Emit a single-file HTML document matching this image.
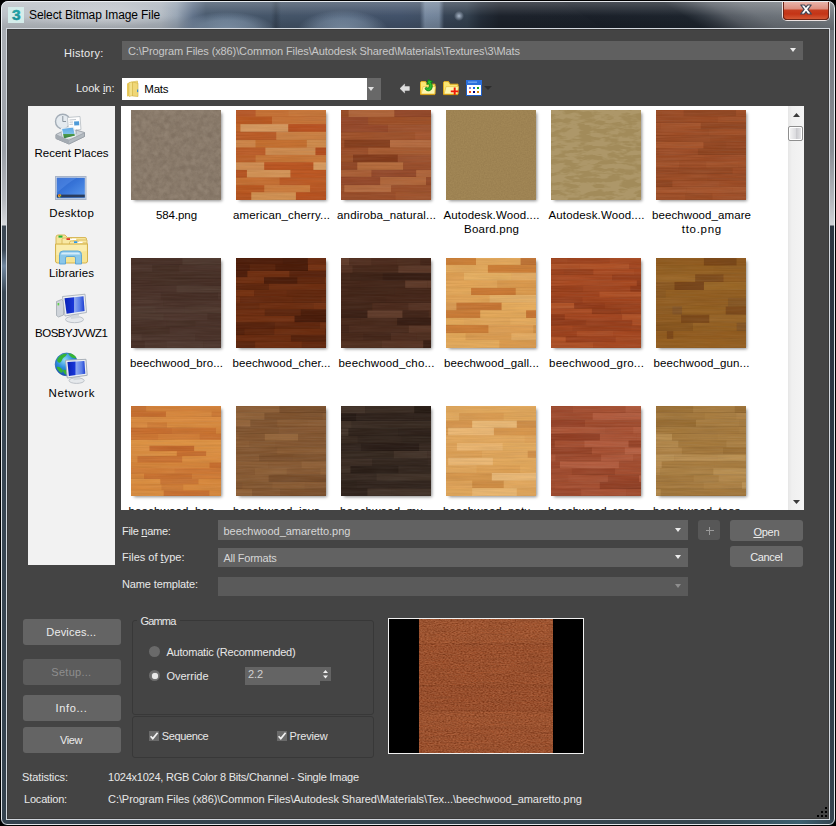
<!DOCTYPE html>
<html><head><meta charset="utf-8"><title>Select Bitmap Image File</title>
<style>
html,body{margin:0;padding:0;background:#000;}
body{width:836px;height:826px;overflow:hidden;position:relative;font-family:"Liberation Sans",sans-serif;}
*{box-sizing:border-box;}
.a{position:absolute;}
.t{position:absolute;white-space:nowrap;line-height:16px;font-family:"Liberation Sans",sans-serif;}
u{text-decoration:underline;text-underline-offset:1px;}
.btn{position:absolute;background:#646464;border-radius:3px;}
.cmb{position:absolute;background:#646464;}
.tri{position:absolute;width:0;height:0;border-left:3.5px solid transparent;border-right:3.5px solid transparent;border-top:4px solid #ececec;}
.th{position:absolute;width:90px;height:90px;overflow:hidden;box-shadow:2px 2px 3px -1px rgba(0,0,0,.45);}
.th svg{display:block;}
.lb{position:absolute;text-align:center;font-size:11.5px;line-height:14px;color:#000;white-space:nowrap;}
</style></head><body>
<div class="a" style="left:0;top:0;width:836px;height:826px;border-radius:8px 8px 7px 7px;background:#36454f;border:1px solid #000;overflow:hidden;"><div class="a" style="left:0;top:0;width:834px;height:29px;overflow:hidden;background:radial-gradient(ellipse 5px 5px at 458px 15px,rgba(200,214,232,.8),rgba(190,205,225,0) 100%),linear-gradient(90deg,rgba(160,178,198,0) 419px,rgba(150,170,194,.62) 424px,rgba(150,170,194,.62) 438px,rgba(160,178,198,0) 443px),linear-gradient(90deg,rgba(30,40,52,0) 270px,rgba(30,40,52,.35) 275px,rgba(30,40,52,0) 280px),radial-gradient(ellipse 50px 20px at 226px 31px,rgba(150,172,196,.95),rgba(150,172,196,.55) 60%,rgba(150,168,188,0) 100%),radial-gradient(ellipse 46px 22px at 342px 31px,rgba(146,168,192,.9),rgba(146,168,192,.5) 60%,rgba(150,168,188,0) 100%),linear-gradient(90deg,#bcc1c7 0px,#b8bec5 120px,#aeb6bf 160px,#96a3b2 176px,#62738a 192px,#47586c 205px,#445468 290px,#42526a 400px,#415065 424px,#364354 444px,#34414f 466px,#242d39 480px,#1c222b 498px,#1a2029 834px);"><div class="a" style="left:560px;top:0;width:500px;height:29px;transform-origin:0 0;transform:skewX(57deg);background:linear-gradient(90deg,#1a2029 0px,#1d242d 100px,#333a43 120px,#565c64 145px,#6a7077 175px,#73797f 230px,#747a80 500px);"></div><div class="a" style="left:0;top:0;width:834px;height:29px;background:linear-gradient(180deg,rgba(255,255,255,.22) 0,rgba(255,255,255,.1) 8px,rgba(255,255,255,0) 15px,rgba(0,0,0,.10) 24px,rgba(0,0,0,.14) 29px);"></div></div><div class="a" style="left:0;top:29px;width:8px;height:796px;background:linear-gradient(180deg,#a9aeb4 0px,#9a9fa6 120px,#b5b9be 170px,#d6d9dc 195px,#3a4652 196px,#3b4855 220px,#7288a0 236px,#3a4855 262px,#34424e 796px);"></div><div class="a" style="left:827px;top:29px;width:8px;height:796px;background:linear-gradient(180deg,#73787e 0px,#8a8f95 120px,#b4b8bd 170px,#cfd2d6 195px,#2b3540 196px,#2c3844 400px,#34444f 796px);"></div><div class="a" style="left:0;top:818px;width:834px;height:8px;background:linear-gradient(90deg,#34424e 0px,#36464f 700px,#3d6070 800px,#34444f 834px);"></div><div class="a" style="left:0;top:0;width:834px;height:824px;border:1px solid rgba(240,243,246,.92);border-radius:7px 7px 6px 6px;"></div></div><div class="a" style="left:6px;top:28px;width:824px;height:792px;border:1px solid #d3d8de;"></div><div class="a" style="left:7px;top:29px;width:822px;height:790px;background:#444444;border:1px solid #3a3a3a;"></div><div class="a" style="left:8px;top:7px;width:16px;height:16px;background:#d4ecea;"><svg width="16" height="16" viewBox="0 0 16 16"><defs><linearGradient id="g3" x1="0" y1="0" x2="0" y2="1"><stop offset="0" stop-color="#2cb6b4"/><stop offset="1" stop-color="#0e7e8c"/></linearGradient></defs><text x="8.2" y="13" text-anchor="middle" font-family="Liberation Sans" font-weight="bold" font-size="15.5" fill="url(#g3)" stroke="#1a9aa0" stroke-width=".5">3</text></svg></div><div class="a" style="left:14px;top:3px;width:170px;height:24px;background:radial-gradient(ellipse 50% 50% at 50% 50%,rgba(255,255,255,.28),rgba(255,255,255,.12) 60%,rgba(255,255,255,0) 100%);"></div><div class="t" style="left:29px;top:6.84px;font-size:12px;color:#000;letter-spacing:-0.098px;">Select Bitmap Image File</div><div class="a" style="left:782px;top:2px;width:48px;height:19px;border:1px solid rgba(255,255,255,.88);border-top:none;border-radius:0 0 5px 5px;background:#5b1408;"></div><div class="a" style="left:783px;top:2px;width:46px;height:18px;border-radius:0 0 4px 4px;background:linear-gradient(180deg,#e9b3a8 0,#dc8e7f 7px,#c63e20 8px,#c43416 12px,#d65f3a 18px);border:1px solid #6e2416;border-top:none;"></div><svg class="a" style="left:798px;top:3px;" width="16" height="13" viewBox="0 0 16 13"><path d="M2.8 2 L6.4 2 L8 4.1 L9.6 2 L13.2 2 L9.9 6.4 L13.4 11 L9.7 11 L8 8.7 L6.3 11 L2.6 11 L6.1 6.4 Z" fill="#fff" stroke="#3f4656" stroke-width="1.2" stroke-linejoin="round"/></svg><div class="t" style="left:64px;top:44.69px;font-size:11px;color:#ececec;letter-spacing:0.277px;">History:</div><div class="cmb" style="left:122px;top:41px;width:681px;height:19px;background:#606060;"></div><div class="t" style="left:128px;top:42.69px;font-size:11px;color:#c8c8c8;letter-spacing:-0.112px;">C:\Program Files (x86)\Common Files\Autodesk Shared\Materials\Textures\3\Mats</div><div class="tri" style="left:789.5px;top:48px;"></div><div class="t" style="left:76px;top:79.69px;font-size:11px;color:#ececec;letter-spacing:-0.008px;">Look <u>i</u>n:</div><div class="a" style="left:122px;top:78px;width:245px;height:22px;background:#fff;"></div><div class="a" style="left:367px;top:78px;width:14px;height:22px;background:#686868;"></div><div class="tri" style="left:367.5px;top:87px;border-top-color:#e0e0e0;"></div><svg class="a" style="left:125px;top:80px;" width="16" height="18" viewBox="0 0 16 18"><path d="M2 3.5 L7 1.5 L7 15 L2 16.5 Z" fill="#e8c95a"/><path d="M4 2.5 L12.5 1 L12.5 14.5 L4 16.5 Z" fill="#f3e08a" stroke="#d9b84a" stroke-width=".6"/><path d="M7.5 2 L13 3.2 L13 16.5 L7.5 16 Z" fill="#f0d778" stroke="#cfae3e" stroke-width=".6"/><rect x="12" y="9.5" width="1.2" height="2.6" fill="#3f8fd0"/></svg><div class="t" style="left:144.3px;top:81.02px;font-size:11.5px;color:#000;letter-spacing:-0.227px;">Mats</div><svg class="a" style="left:399px;top:83px;" width="12" height="11" viewBox="0 0 12 11"><path d="M1 5.5 L5.6 1 L5.6 3.6 L10.4 3.6 L10.4 7.4 L5.6 7.4 L5.6 10 Z" fill="#dedede" stroke="#f2f2f2" stroke-width=".4"/></svg><svg class="a" style="left:419px;top:79px;" width="18" height="18" viewBox="0 0 18 18"><path d="M1.5 3.2 L1.5 15.2 L16 15.2 L16 5.2 L8 5.2 L6.6 2.6 L2.2 2.6 Z" fill="#fbe774" stroke="#e4b020" stroke-width="1"/><path d="M2.2 15 L4 7.6 L16.4 7.6 L15.6 15 Z" fill="#fef7b0" stroke="#ecc23c" stroke-width=".7"/><path d="M1.5 15.6 L16 15.6" stroke="#d49c12" stroke-width="1"/><path d="M6 9.4 C7 12 10.6 12.8 12.4 10.2 C13.8 8 13.4 5 11.8 3.4 L13.8 2.6 L9.4 .8 L7.8 5.4 L9.6 4.6 C10.8 6.4 10.6 8.2 9.4 8.8 C8.4 9.2 7.4 8.6 7.4 8.2 Z" fill="#2ebc2e" stroke="#0a7f14" stroke-width=".9" stroke-linejoin="round"/></svg><svg class="a" style="left:442px;top:79px;" width="18" height="18" viewBox="0 0 18 18"><path d="M1.5 3.2 L1.5 15.2 L16 15.2 L16 5.2 L8 5.2 L6.6 2.6 L2.2 2.6 Z" fill="#fbe774" stroke="#e4b020" stroke-width="1"/><path d="M2.2 15 L4 7.6 L16.4 7.6 L15.6 15 Z" fill="#fef7b0" stroke="#ecc23c" stroke-width=".7"/><path d="M1.5 15.6 L16 15.6" stroke="#d49c12" stroke-width="1"/><path d="M12.7 8.6 L12.7 15.8 M8.8 12.4 L16.4 12.4" stroke="#f01808" stroke-width="1.9"/></svg><svg class="a" style="left:466px;top:80px;" width="16" height="16" viewBox="0 0 16 16"><rect x=".5" y=".5" width="15" height="15" fill="#fff" stroke="#1f5fc8" stroke-width="1"/><rect x="0" y="0" width="16" height="5" fill="#2b6fdc"/><rect x="2" y="1.5" width="9" height="1.4" fill="#6fa3ef"/><rect x="3" y="7" width="2" height="2" fill="#8c84d4"/><rect x="7" y="7" width="2" height="2" fill="#1565e6"/><rect x="11" y="7" width="2" height="2" fill="#12a51a"/><rect x="3" y="11" width="2" height="2" fill="#ff4a0a"/><rect x="7" y="11" width="2" height="2" fill="#00007c"/><rect x="11" y="11" width="2" height="2" fill="#d68208"/></svg><div class="tri" style="left:484px;top:86px;border-left-width:4px;border-right-width:4px;border-top-width:4px;border-top-color:#2c2c2c;"></div><div class="a" style="left:28px;top:106px;width:87px;height:459px;background:#f2f2f2;"></div><svg class="a" style="left:54px;top:112px;" width="34" height="34" viewBox="0 0 34 34"><defs><linearGradient id="ph" x1="0" y1="0" x2="0" y2="1"><stop offset="0" stop-color="#5aa4e4"/><stop offset=".55" stop-color="#7cc0e8"/><stop offset=".6" stop-color="#4f9a4a"/><stop offset="1" stop-color="#2f7a3a"/></linearGradient></defs><circle cx="8.8" cy="9.5" r="7.3" fill="#e4eaef" stroke="#a3adb7" stroke-width="1.4"/><path d="M8.8 4 L8.8 9.5 L12 9.5" stroke="#8a949e" stroke-width="1" fill="none"/><path d="M13.5 5.5 L26 4.5 L27 17.5 L14.5 19 Z" fill="#fdfdfd" stroke="#b4bbc2" stroke-width=".8"/><path d="M15.5 8 L22 7.5 M15.5 10.2 L19 10 M15.5 12.4 L19 12.2" stroke="#b9c0c7" stroke-width=".9"/><path d="M20 9.5 L25 9.2 L25.3 13.2 L20.3 13.6 Z" fill="#4d9ad8"/><path d="M2 22.5 L8 19.5 L8 24.5 L22 22 L22 18 L30.5 20.5 L30.5 24.5 L15 32 L2 26.5 Z" fill="#cdd2d7" stroke="#8e969e" stroke-width=".8"/><path d="M7.5 16.5 L19.5 15 L21.5 24 L9.5 27 Z" fill="url(#ph)" stroke="#eef2f5" stroke-width="1.1"/><path d="M2 22.8 L15 28.2 L30.5 20.8 L30.5 24.5 L15 32 L2 26.5 Z" fill="#b3bac0" stroke="#8e969e" stroke-width=".6"/><path d="M2 22.8 L15 28.2 L15 32 L2 26.5 Z" fill="#a4abb2"/></svg><div class="t" style="left:-28.50px;width:200px;text-align:center;top:145.02px;font-size:11.5px;color:#000;letter-spacing:-0.010px;">Recent Places</div><svg class="a" style="left:55px;top:176px;" width="32" height="24" viewBox="0 0 32 24"><defs><linearGradient id="dk" x1="0" y1="0" x2="1" y2="1"><stop offset="0" stop-color="#2a5fc6"/><stop offset=".45" stop-color="#3774d8"/><stop offset="1" stop-color="#5a98ec"/></linearGradient></defs><rect x=".5" y=".5" width="30.5" height="23" fill="#cdd6e4" stroke="#a8b4c8" stroke-width="1"/><rect x="1.8" y="1.8" width="28" height="20.4" fill="url(#dk)"/><path d="M1.8 1.8 L22 1.8 C14 6 8 12 1.8 17 Z" fill="#5a92ec" opacity=".45"/><rect x="1.8" y="18.6" width="28" height="2.8" fill="#2b3d5c"/><rect x="3" y="18.2" width="3.2" height="3.2" rx="1.4" fill="#e8b030"/><rect x="3.8" y="18.6" width="1.4" height="1.4" fill="#d84820"/><rect x="4.8" y="19.8" width="1.2" height="1.2" fill="#3a9a3a"/></svg><div class="t" style="left:-28.30px;width:200px;text-align:center;top:205.02px;font-size:11.5px;color:#000;letter-spacing:0.404px;">Desktop</div><svg class="a" style="left:54px;top:233px;" width="35" height="32" viewBox="0 0 35 32"><path d="M2 4.2 Q2 2 4 2 L11 2 L13.5 4.5 L31 4.5 Q32.5 4.5 32.5 6 L32.5 29 L2 29 Z" fill="#f6e49a" stroke="#d8b95c" stroke-width="1"/><rect x="4.5" y="2.6" width="4" height="2" fill="#22b43a"/><path d="M8 6.5 Q8 5 10 5 L17 5 L19 7 L33 7 L33 29 L8 29 Z" fill="#f8e8a4" stroke="#d8b95c" stroke-width=".9"/><rect x="12.5" y="5.2" width="3.5" height="1.8" fill="#e0382a"/><rect x="16.2" y="5.6" width="6" height="1.5" fill="#fff"/><path d="M15.5 9.5 Q15.5 8 17.5 8 L24 8 L26 10 L33 10 L33 29 L15.5 29 Z" fill="#f9eaa8" stroke="#d8b95c" stroke-width=".9"/><rect x="20" y="8.3" width="3.4" height="1.7" fill="#2a98ea"/><rect x="23.6" y="8.7" width="5" height="1.4" fill="#fff"/><path d="M1.5 11 L33.5 11 L33.5 28 Q33.5 30 31.5 30 L3.5 30 Q1.5 30 1.5 28 Z" fill="#f7e594" stroke="#d4b24e" stroke-width="1"/><path d="M2.5 12 L32.5 12 L32.5 18 L2.5 22 Z" fill="#fbf0b8" opacity=".7"/><path d="M5.5 31 L5.5 21.5 Q5.5 18 9 18 L24 18 Q27.5 18 27.5 21.5 L27.5 31 L21.5 31 L21.5 25 Q21.5 23.5 20 23.5 L13 23.5 Q11.5 23.5 11.5 25 L11.5 31 Z" fill="#86c6ee" stroke="#4f9fd8" stroke-width=".9" opacity=".95"/><path d="M7 21.5 Q7 19.5 9 19.5 L24 19.5 Q26 19.5 26 21.5 L7 21.5 Z" fill="#d4ecfa"/></svg><div class="t" style="left:-28.45px;width:200px;text-align:center;top:265.02px;font-size:11.5px;color:#000;letter-spacing:0.101px;">Libraries</div><svg class="a" style="left:55px;top:293px;" width="33" height="31" viewBox="0 0 33 31"><defs><linearGradient id="sc" x1="0" y1="0" x2="1" y2="0"><stop offset="0" stop-color="#0a22b4"/><stop offset=".45" stop-color="#1836d8"/><stop offset=".5" stop-color="#8ea8f0"/><stop offset=".75" stop-color="#5a7ee8"/><stop offset="1" stop-color="#1c3cd0"/></linearGradient></defs><path d="M1.5 8.5 L6.5 6.5 L8.5 8 L8.5 22 L3.5 24 L1.5 22.5 Z" fill="#cfd4da" stroke="#9aa2ab" stroke-width=".7"/><rect x="2.6" y="10" width="1.6" height="2.4" fill="#5fd04a"/><ellipse cx="19.5" cy="26.5" rx="9" ry="3.2" fill="#e6e9ec" stroke="#b1b8bf" stroke-width=".8"/><path d="M16 20 L24 19 L24 25 L16 26 Z" fill="#d2d7dc"/><path d="M7.5 3.5 L30 1.2 L31.5 19.5 L10 23 Z" fill="#eceff2" stroke="#a9b1ba" stroke-width=".9"/><path d="M9.5 5.2 L28.5 3.2 L29.6 18 L11.6 20.8 Z" fill="url(#sc)"/></svg><div class="t" style="left:-28.74px;width:200px;text-align:center;top:325.02px;font-size:11.5px;color:#000;letter-spacing:-0.483px;">BOSBYJVWZ1</div><svg class="a" style="left:54px;top:351px;" width="35" height="35" viewBox="0 0 35 35"><defs><radialGradient id="gl" cx=".42" cy=".3" r=".75"><stop offset="0" stop-color="#8fdcf4"/><stop offset=".45" stop-color="#2f8ee0"/><stop offset="1" stop-color="#1444a8"/></radialGradient><linearGradient id="sc2" x1="0" y1="0" x2="1" y2="0"><stop offset="0" stop-color="#0a22b4"/><stop offset=".42" stop-color="#1836d8"/><stop offset=".48" stop-color="#8ea8f0"/><stop offset=".8" stop-color="#5a7ee8"/><stop offset="1" stop-color="#1c3cd0"/></linearGradient></defs><circle cx="12.6" cy="13.4" r="11.4" fill="url(#gl)" stroke="#1d55a8" stroke-width=".6"/><path d="M3 9 C5 4 10 2 13 3 C12 6 9 6 8 9 C7 12 4 13 3 9 Z M14 2.5 C18 2 21 4 22.5 7 C20 8 17 7 14 2.5 Z M2.5 16 C5 15 8 17 9 20 C8 23 5 22 2.5 16 Z M9 19 C12 18 14 20 13.5 23.5 C11 24.5 9.5 22 9 19 Z" fill="#36b436"/><ellipse cx="22.6" cy="29.6" rx="7.6" ry="2.8" fill="#e6e9ec" stroke="#b1b8bf" stroke-width=".8"/><path d="M19.5 25 L26 24.3 L26 28.6 L19.5 29.2 Z" fill="#d2d7dc"/><path d="M11.5 9.3 L32 8.3 L33.2 24.3 L13.3 27 Z" fill="#eceff2" stroke="#a1a9b2" stroke-width=".9"/><path d="M13.4 11 L30.4 10 L31.3 22.8 L14.9 25 Z" fill="url(#sc2)"/></svg><div class="t" style="left:-28.19px;width:200px;text-align:center;top:385.02px;font-size:11.5px;color:#000;letter-spacing:0.618px;">Network</div><div class="a" id="list" style="left:121px;top:106px;width:683px;height:404px;background:#fff;overflow:hidden;"><svg width="0" height="0" style="position:absolute"><defs><filter id="grain" x="0" y="0" width="100%" height="100%" color-interpolation-filters="sRGB"><feTurbulence type="fractalNoise" baseFrequency="0.03 0.6" numOctaves="2" seed="3"/><feColorMatrix type="matrix" values="0 0 0 0 0.000  0 0 0 0 0.000  0 0 0 0 0.000  1.4 1.4 0 0 -1.0"/></filter><filter id="grainl" x="0" y="0" width="100%" height="100%" color-interpolation-filters="sRGB"><feTurbulence type="fractalNoise" baseFrequency="0.03 0.6" numOctaves="2" seed="9"/><feColorMatrix type="matrix" values="0 0 0 0 1.000  0 0 0 0 1.000  0 0 0 0 1.000  1.4 1.4 0 0 -1.0"/></filter><filter id="stucco" x="0" y="0" width="100%" height="100%" color-interpolation-filters="sRGB"><feTurbulence type="fractalNoise" baseFrequency="0.18" numOctaves="4" seed="8"/><feColorMatrix type="matrix" values="0 0 0 0 0.353  0 0 0 0 0.298  0 0 0 0 0.251  1.6 1.6 0 0 -1.1"/></filter><filter id="stuccol" x="0" y="0" width="100%" height="100%" color-interpolation-filters="sRGB"><feTurbulence type="fractalNoise" baseFrequency="0.18" numOctaves="4" seed="21"/><feColorMatrix type="matrix" values="0 0 0 0 0.690  0 0 0 0 0.635  0 0 0 0 0.573  1.6 1.6 0 0 -1.2"/></filter><filter id="fine" x="0" y="0" width="100%" height="100%" color-interpolation-filters="sRGB"><feTurbulence type="fractalNoise" baseFrequency="0.7" numOctaves="2" seed="5"/><feColorMatrix type="matrix" values="0 0 0 0 0.478  0 0 0 0 0.376  0 0 0 0 0.220  1.2 1.2 0 0 -0.8"/></filter><filter id="speck" x="0" y="0" width="100%" height="100%" color-interpolation-filters="sRGB"><feTurbulence type="fractalNoise" baseFrequency="0.5 0.9" numOctaves="2" seed="31"/><feColorMatrix type="matrix" values="0 0 0 0 0.416  0 0 0 0 0.173  0 0 0 0 0.063  1.6 1.6 0 0 -0.95"/></filter><filter id="speckl" x="0" y="0" width="100%" height="100%" color-interpolation-filters="sRGB"><feTurbulence type="fractalNoise" baseFrequency="0.5 0.9" numOctaves="2" seed="47"/><feColorMatrix type="matrix" values="0 0 0 0 0.784  0 0 0 0 0.502  0 0 0 0 0.353  1.6 1.6 0 0 -1.0"/></filter><filter id="wavy" x="0" y="0" width="100%" height="100%" color-interpolation-filters="sRGB"><feTurbulence type="fractalNoise" baseFrequency="0.07 0.22" numOctaves="3" seed="11"/><feColorMatrix type="matrix" values="0 0 0 0 0.722  0 0 0 0 0.643  0 0 0 0 0.471  4 4 0 0 -3.5"/></filter></defs></svg><div class="th" style="left:10px;top:4px;"><svg width="90" height="90" viewBox="0 0 90 90"><rect width="90" height="90" fill="#8b7c6c"/><rect width="90" height="90" fill="#5e5044" filter="url(#stucco)" opacity="0.22"/><rect width="90" height="90" filter="url(#stuccol)" opacity="0.2"/></svg></div><div class="lb" style="left:-44.54px;width:200px;top:101.82px;letter-spacing:-0.076px;">584.png</div><div class="th" style="left:115px;top:4px;"><svg width="90" height="90" viewBox="0 0 90 90"><rect width="90" height="90" fill="#c4682f"/><rect x="0.0" y="0.00" width="19.9" height="6.74" fill="#ba5a29"/><rect x="19.6" y="0.00" width="33.0" height="6.74" fill="#c77235"/><rect x="52.3" y="0.00" width="38.0" height="6.74" fill="#c8773a"/><rect x="0" y="6.04" width="90" height="0.6" fill="#000" opacity="0.06"/><rect x="0.0" y="6.54" width="36.3" height="7.83" fill="#bb5921"/><rect x="36.0" y="6.54" width="54.3" height="7.83" fill="#c77438"/><rect x="0" y="13.66" width="90" height="0.6" fill="#000" opacity="0.06"/><rect x="0.0" y="14.16" width="4.7" height="7.83" fill="#c16529"/><rect x="4.4" y="14.16" width="48.2" height="7.83" fill="#d5985f"/><rect x="52.3" y="14.16" width="38.0" height="7.83" fill="#ba5221"/><rect x="0" y="21.29" width="90" height="0.6" fill="#000" opacity="0.06"/><rect x="0.0" y="21.79" width="40.6" height="8.37" fill="#ba5c27"/><rect x="40.3" y="21.79" width="50.0" height="8.37" fill="#cb8043"/><rect x="0" y="29.46" width="90" height="0.6" fill="#000" opacity="0.06"/><rect x="0.0" y="29.96" width="19.9" height="7.83" fill="#cd8549"/><rect x="19.6" y="29.96" width="51.5" height="7.83" fill="#c46f2f"/><rect x="70.8" y="29.96" width="19.5" height="7.83" fill="#ce8a4b"/><rect x="0" y="37.09" width="90" height="0.6" fill="#000" opacity="0.06"/><rect x="0.0" y="37.59" width="29.7" height="7.83" fill="#bb5c27"/><rect x="29.4" y="37.59" width="50.4" height="7.83" fill="#ce8c50"/><rect x="79.5" y="37.59" width="10.8" height="7.83" fill="#b34e1f"/><rect x="0" y="44.72" width="90" height="0.6" fill="#000" opacity="0.06"/><rect x="0.0" y="45.22" width="19.9" height="7.28" fill="#bd6129"/><rect x="19.6" y="45.22" width="70.7" height="7.28" fill="#c77637"/><rect x="0" y="51.80" width="90" height="0.6" fill="#000" opacity="0.06"/><rect x="0.0" y="52.30" width="28.6" height="7.83" fill="#d08d52"/><rect x="28.3" y="52.30" width="49.3" height="7.83" fill="#ba5521"/><rect x="77.4" y="52.30" width="12.9" height="7.83" fill="#d89b5f"/><rect x="0" y="59.43" width="90" height="0.6" fill="#000" opacity="0.06"/><rect x="0.0" y="59.93" width="11.2" height="7.83" fill="#b65421"/><rect x="10.9" y="59.93" width="43.9" height="7.83" fill="#d29255"/><rect x="54.5" y="59.93" width="35.8" height="7.83" fill="#bc5722"/><rect x="0" y="67.05" width="90" height="0.6" fill="#000" opacity="0.06"/><rect x="0.0" y="67.55" width="43.9" height="7.83" fill="#c67033"/><rect x="43.6" y="67.55" width="46.7" height="7.83" fill="#bd5c26"/><rect x="0" y="74.68" width="90" height="0.6" fill="#000" opacity="0.06"/><rect x="0.0" y="75.18" width="28.6" height="7.28" fill="#ba5921"/><rect x="28.3" y="75.18" width="46.1" height="7.28" fill="#cb7c3d"/><rect x="74.1" y="75.18" width="16.2" height="7.28" fill="#ba5722"/><rect x="0" y="81.76" width="90" height="0.6" fill="#000" opacity="0.06"/><rect x="0.0" y="82.26" width="15.6" height="7.94" fill="#b6541f"/><rect x="15.3" y="82.26" width="45.0" height="7.94" fill="#d19152"/><rect x="59.9" y="82.26" width="30.4" height="7.94" fill="#b8521f"/><rect x="0" y="89.50" width="90" height="0.6" fill="#000" opacity="0.06"/><rect width="90" height="90" filter="url(#grain)" opacity="0.05"/><rect width="90" height="90" filter="url(#grainl)" opacity="0.04"/></svg></div><div class="lb" style="left:60.57px;width:200px;top:101.82px;letter-spacing:0.149px;">american_cherry...</div><div class="th" style="left:220px;top:4px;"><svg width="90" height="90" viewBox="0 0 90 90"><rect width="90" height="90" fill="#9c5028"/><rect x="0.0" y="0.00" width="7.9" height="7.28" fill="#9a4d26"/><rect x="7.6" y="0.00" width="46.1" height="7.28" fill="#b1663b"/><rect x="53.4" y="0.00" width="36.9" height="7.28" fill="#95492a"/><rect x="0" y="6.58" width="90" height="0.6" fill="#000" opacity="0.08"/><rect x="0.0" y="7.08" width="27.5" height="7.83" fill="#97492a"/><rect x="27.2" y="7.08" width="63.1" height="7.83" fill="#9e5028"/><rect x="0" y="14.21" width="90" height="0.6" fill="#000" opacity="0.08"/><rect x="0.0" y="14.71" width="47.2" height="7.83" fill="#96492a"/><rect x="46.9" y="14.71" width="43.4" height="7.83" fill="#9f532f"/><rect x="0" y="21.84" width="90" height="0.6" fill="#000" opacity="0.08"/><rect x="0.0" y="22.34" width="74.4" height="7.83" fill="#9f522b"/><rect x="74.1" y="22.34" width="16.2" height="7.83" fill="#a65832"/><rect x="0" y="29.46" width="90" height="0.6" fill="#000" opacity="0.08"/><rect x="0.0" y="29.96" width="3.6" height="7.83" fill="#9a4d28"/><rect x="3.3" y="29.96" width="46.1" height="7.83" fill="#863f1e"/><rect x="49.0" y="29.96" width="41.3" height="7.83" fill="#b46b40"/><rect x="0" y="37.09" width="90" height="0.6" fill="#000" opacity="0.08"/><rect x="0.0" y="37.59" width="27.5" height="7.28" fill="#9a4d28"/><rect x="27.2" y="37.59" width="63.1" height="7.28" fill="#a85c32"/><rect x="0" y="44.17" width="90" height="0.6" fill="#000" opacity="0.08"/><rect x="0.0" y="44.67" width="12.3" height="7.83" fill="#9c5028"/><rect x="12.0" y="44.67" width="45.0" height="7.83" fill="#843c1c"/><rect x="56.7" y="44.67" width="33.6" height="7.83" fill="#9c522f"/><rect x="0" y="51.80" width="90" height="0.6" fill="#000" opacity="0.08"/><rect x="0.0" y="52.30" width="16.6" height="7.83" fill="#924826"/><rect x="16.3" y="52.30" width="46.1" height="7.83" fill="#b46b3c"/><rect x="62.1" y="52.30" width="28.2" height="7.83" fill="#9a4e2b"/><rect x="0" y="59.43" width="90" height="0.6" fill="#000" opacity="0.08"/><rect x="0.0" y="59.93" width="30.8" height="7.28" fill="#aa5f36"/><rect x="30.5" y="59.93" width="45.0" height="7.28" fill="#94492a"/><rect x="75.2" y="59.93" width="15.1" height="7.28" fill="#b0663c"/><rect x="0" y="66.51" width="90" height="0.6" fill="#000" opacity="0.08"/><rect x="0.0" y="67.01" width="39.5" height="8.37" fill="#95492a"/><rect x="39.2" y="67.01" width="46.1" height="8.37" fill="#b2683c"/><rect x="85.0" y="67.01" width="5.3" height="8.37" fill="#974b2a"/><rect x="0" y="74.68" width="90" height="0.6" fill="#000" opacity="0.08"/><rect x="0.0" y="75.18" width="3.6" height="7.28" fill="#99502b"/><rect x="3.3" y="75.18" width="47.2" height="7.28" fill="#b46b40"/><rect x="50.1" y="75.18" width="40.2" height="7.28" fill="#9c502b"/><rect x="0" y="81.76" width="90" height="0.6" fill="#000" opacity="0.08"/><rect x="0.0" y="82.26" width="54.8" height="7.94" fill="#9a4e2a"/><rect x="54.5" y="82.26" width="35.8" height="7.94" fill="#a1552f"/><rect x="0" y="89.50" width="90" height="0.6" fill="#000" opacity="0.08"/><rect width="90" height="90" filter="url(#grain)" opacity="0.05"/><rect width="90" height="90" filter="url(#grainl)" opacity="0.04"/></svg></div><div class="lb" style="left:165.58px;width:200px;top:101.82px;letter-spacing:0.167px;">andiroba_natural...</div><div class="th" style="left:325px;top:4px;"><svg width="90" height="90" viewBox="0 0 90 90"><rect width="90" height="90" fill="#a28756"/><rect width="90" height="90" fill="#7a6038" filter="url(#fine)" opacity="0.22"/></svg></div><div class="lb" style="left:270.57px;width:200px;top:101.82px;letter-spacing:0.136px;">Autodesk.Wood....</div><div class="lb" style="left:270.61px;width:200px;top:115.82px;letter-spacing:0.219px;">Board.png</div><div class="th" style="left:430px;top:4px;"><svg width="90" height="90" viewBox="0 0 90 90"><rect width="90" height="90" fill="#a28b5a"/><rect width="90" height="90" fill="#9a8250" filter="url(#wavy)" opacity="0.5"/></svg></div><div class="lb" style="left:375.57px;width:200px;top:101.82px;letter-spacing:0.136px;">Autodesk.Wood....</div><div class="th" style="left:535px;top:4px;"><svg width="90" height="90" viewBox="0 0 90 90"><rect width="90" height="90" fill="#9e4d26"/><rect x="-49.2" y="0.00" width="55.2" height="6.63" fill="#9c4c25"/><rect x="5.7" y="0.00" width="22.3" height="6.63" fill="#9e4d26"/><rect x="27.7" y="0.00" width="52.7" height="6.63" fill="#934722"/><rect x="80.1" y="0.00" width="33.2" height="6.63" fill="#a04f27"/><rect x="0" y="5.83" width="90" height="0.7" fill="#000" opacity="0.08"/><rect x="-25.7" y="6.43" width="43.8" height="6.63" fill="#9b4b25"/><rect x="17.9" y="6.43" width="44.4" height="6.63" fill="#9c4c25"/><rect x="62.0" y="6.43" width="54.4" height="6.63" fill="#a15028"/><rect x="0" y="12.26" width="90" height="0.7" fill="#000" opacity="0.08"/><rect x="-20.8" y="12.86" width="26.0" height="6.63" fill="#a15028"/><rect x="4.9" y="12.86" width="40.1" height="6.63" fill="#a4532b"/><rect x="44.7" y="12.86" width="47.7" height="6.63" fill="#924621"/><rect x="0" y="18.69" width="90" height="0.7" fill="#000" opacity="0.08"/><rect x="-36.5" y="19.29" width="30.3" height="6.63" fill="#9d4c25"/><rect x="-6.5" y="19.29" width="59.6" height="6.63" fill="#9e4d26"/><rect x="52.9" y="19.29" width="48.1" height="6.63" fill="#a15028"/><rect x="0" y="25.11" width="90" height="0.7" fill="#000" opacity="0.08"/><rect x="-60.5" y="25.71" width="23.4" height="6.63" fill="#944722"/><rect x="-37.4" y="25.71" width="34.5" height="6.63" fill="#9a4b24"/><rect x="-3.2" y="25.71" width="57.5" height="6.63" fill="#9a4b25"/><rect x="54.0" y="25.71" width="48.8" height="6.63" fill="#974923"/><rect x="0" y="31.54" width="90" height="0.7" fill="#000" opacity="0.08"/><rect x="-30.0" y="32.14" width="27.8" height="6.63" fill="#934622"/><rect x="-2.5" y="32.14" width="50.2" height="6.63" fill="#a7562d"/><rect x="47.5" y="32.14" width="23.0" height="6.63" fill="#934621"/><rect x="70.1" y="32.14" width="47.1" height="6.63" fill="#964823"/><rect x="0" y="37.97" width="90" height="0.7" fill="#000" opacity="0.08"/><rect x="-24.1" y="38.57" width="27.4" height="6.63" fill="#9a4a24"/><rect x="2.9" y="38.57" width="39.2" height="6.63" fill="#9d4c26"/><rect x="41.9" y="38.57" width="61.5" height="6.63" fill="#924621"/><rect x="0" y="44.40" width="90" height="0.7" fill="#000" opacity="0.08"/><rect x="-55.3" y="45.00" width="49.1" height="6.63" fill="#9d4d26"/><rect x="-6.5" y="45.00" width="55.6" height="6.63" fill="#9e4d26"/><rect x="48.7" y="45.00" width="41.1" height="6.63" fill="#9d4c26"/><rect x="89.6" y="45.00" width="25.7" height="6.63" fill="#9c4c25"/><rect x="0" y="50.83" width="90" height="0.7" fill="#000" opacity="0.08"/><rect x="-30.2" y="51.43" width="53.7" height="6.63" fill="#a3522a"/><rect x="23.1" y="51.43" width="27.2" height="6.63" fill="#9d4c25"/><rect x="50.1" y="51.43" width="32.6" height="6.63" fill="#a25129"/><rect x="82.3" y="51.43" width="32.5" height="6.63" fill="#a15028"/><rect x="0" y="57.26" width="90" height="0.7" fill="#000" opacity="0.08"/><rect x="-38.0" y="57.86" width="33.0" height="6.63" fill="#9e4d26"/><rect x="-5.2" y="57.86" width="28.0" height="6.63" fill="#964823"/><rect x="22.4" y="57.86" width="54.5" height="6.63" fill="#944722"/><rect x="76.6" y="57.86" width="61.1" height="6.63" fill="#9d4c26"/><rect x="0" y="63.69" width="90" height="0.7" fill="#000" opacity="0.08"/><rect x="-37.4" y="64.29" width="35.1" height="6.63" fill="#9e4d26"/><rect x="-2.6" y="64.29" width="54.0" height="6.63" fill="#9c4c25"/><rect x="51.2" y="64.29" width="22.5" height="6.63" fill="#9a4a24"/><rect x="73.4" y="64.29" width="23.5" height="6.63" fill="#9a4b25"/><rect x="0" y="70.11" width="90" height="0.7" fill="#000" opacity="0.08"/><rect x="-44.5" y="70.71" width="36.8" height="6.63" fill="#a15028"/><rect x="-8.1" y="70.71" width="24.8" height="6.63" fill="#924621"/><rect x="16.4" y="70.71" width="46.8" height="6.63" fill="#a04f28"/><rect x="63.0" y="70.71" width="54.8" height="6.63" fill="#9e4d26"/><rect x="0" y="76.54" width="90" height="0.7" fill="#000" opacity="0.08"/><rect x="-6.2" y="77.14" width="36.8" height="6.63" fill="#a6552d"/><rect x="30.3" y="77.14" width="46.6" height="6.63" fill="#a6552d"/><rect x="76.5" y="77.14" width="26.2" height="6.63" fill="#a7562d"/><rect x="0" y="82.97" width="90" height="0.7" fill="#000" opacity="0.08"/><rect x="-28.7" y="83.57" width="58.3" height="6.63" fill="#a04f27"/><rect x="29.3" y="83.57" width="27.4" height="6.63" fill="#9a4b24"/><rect x="56.4" y="83.57" width="47.0" height="6.63" fill="#a15029"/><rect x="0" y="89.40" width="90" height="0.7" fill="#000" opacity="0.08"/><rect width="90" height="90" filter="url(#grain)" opacity="0.06"/><rect width="90" height="90" filter="url(#grainl)" opacity="0.05"/></svg></div><div class="lb" style="left:480.54px;width:200px;top:101.82px;letter-spacing:0.082px;">beechwood_amare</div><div class="lb" style="left:480.85px;width:200px;top:115.82px;letter-spacing:0.696px;">tto.png</div><div class="th" style="left:10px;top:152px;"><svg width="90" height="90" viewBox="0 0 90 90"><rect width="90" height="90" fill="#4b332a"/><rect x="-20.1" y="0.00" width="28.3" height="7.12" fill="#493128"/><rect x="8.0" y="0.00" width="43.7" height="7.12" fill="#483027"/><rect x="51.4" y="0.00" width="42.6" height="7.12" fill="#4f392f"/><rect x="0" y="6.32" width="90" height="0.7" fill="#000" opacity="0.08"/><rect x="-4.3" y="6.92" width="25.9" height="7.12" fill="#4d352c"/><rect x="21.3" y="6.92" width="27.3" height="7.12" fill="#462f25"/><rect x="48.2" y="6.92" width="60.2" height="7.12" fill="#4b332a"/><rect x="0" y="13.25" width="90" height="0.7" fill="#000" opacity="0.08"/><rect x="-60.5" y="13.85" width="24.2" height="7.12" fill="#4a3229"/><rect x="-36.7" y="13.85" width="28.1" height="7.12" fill="#4f382f"/><rect x="-8.9" y="13.85" width="54.9" height="7.12" fill="#462f25"/><rect x="45.8" y="13.85" width="47.9" height="7.12" fill="#462f25"/><rect x="0" y="20.17" width="90" height="0.7" fill="#000" opacity="0.08"/><rect x="-3.9" y="20.77" width="24.7" height="7.12" fill="#462e25"/><rect x="20.5" y="20.77" width="39.4" height="7.12" fill="#462f25"/><rect x="59.6" y="20.77" width="40.4" height="7.12" fill="#462e25"/><rect x="0" y="27.09" width="90" height="0.7" fill="#000" opacity="0.08"/><rect x="-43.3" y="27.69" width="32.1" height="7.12" fill="#4b332a"/><rect x="-11.6" y="27.69" width="57.3" height="7.12" fill="#4a3229"/><rect x="45.4" y="27.69" width="61.5" height="7.12" fill="#4f392f"/><rect x="0" y="34.02" width="90" height="0.7" fill="#000" opacity="0.08"/><rect x="-46.9" y="34.62" width="28.4" height="7.12" fill="#493128"/><rect x="-18.9" y="34.62" width="49.0" height="7.12" fill="#4b332a"/><rect x="29.9" y="34.62" width="57.3" height="7.12" fill="#462e25"/><rect x="86.9" y="34.62" width="46.1" height="7.12" fill="#4b332a"/><rect x="0" y="40.94" width="90" height="0.7" fill="#000" opacity="0.08"/><rect x="-52.1" y="41.54" width="60.1" height="7.12" fill="#4c342b"/><rect x="7.7" y="41.54" width="24.7" height="7.12" fill="#4c342b"/><rect x="32.1" y="41.54" width="62.0" height="7.12" fill="#4a3229"/><rect x="0" y="47.86" width="90" height="0.7" fill="#000" opacity="0.08"/><rect x="-23.9" y="48.46" width="49.0" height="7.12" fill="#4f392f"/><rect x="24.8" y="48.46" width="29.0" height="7.12" fill="#4e372e"/><rect x="53.5" y="48.46" width="53.0" height="7.12" fill="#4f382e"/><rect x="0" y="54.78" width="90" height="0.7" fill="#000" opacity="0.08"/><rect x="-24.2" y="55.38" width="57.2" height="7.12" fill="#4f392f"/><rect x="32.6" y="55.38" width="44.3" height="7.12" fill="#4d352c"/><rect x="76.6" y="55.38" width="56.9" height="7.12" fill="#472f26"/><rect x="0" y="61.71" width="90" height="0.7" fill="#000" opacity="0.08"/><rect x="-22.2" y="62.31" width="57.7" height="7.12" fill="#493128"/><rect x="35.1" y="62.31" width="29.3" height="7.12" fill="#473026"/><rect x="64.2" y="62.31" width="41.7" height="7.12" fill="#4a3229"/><rect x="0" y="68.63" width="90" height="0.7" fill="#000" opacity="0.08"/><rect x="-0.3" y="69.23" width="39.1" height="7.12" fill="#462f25"/><rect x="38.5" y="69.23" width="60.4" height="7.12" fill="#4b332a"/><rect x="0" y="75.55" width="90" height="0.7" fill="#000" opacity="0.08"/><rect x="-38.3" y="76.15" width="49.3" height="7.12" fill="#513a31"/><rect x="10.8" y="76.15" width="53.5" height="7.12" fill="#4c352c"/><rect x="64.0" y="76.15" width="38.0" height="7.12" fill="#493128"/><rect x="0" y="82.48" width="90" height="0.7" fill="#000" opacity="0.08"/><rect x="-39.3" y="83.08" width="24.8" height="7.12" fill="#4f382e"/><rect x="-14.8" y="83.08" width="28.8" height="7.12" fill="#483027"/><rect x="13.7" y="83.08" width="22.3" height="7.12" fill="#4e372e"/><rect x="35.7" y="83.08" width="36.8" height="7.12" fill="#513a31"/><rect x="72.2" y="83.08" width="46.9" height="7.12" fill="#4f382f"/><rect x="0" y="89.40" width="90" height="0.7" fill="#000" opacity="0.08"/><rect width="90" height="90" filter="url(#grain)" opacity="0.05"/><rect width="90" height="90" filter="url(#grainl)" opacity="0.04"/></svg></div><div class="lb" style="left:-44.45px;width:200px;top:249.82px;letter-spacing:0.103px;">beechwood_bro...</div><div class="th" style="left:115px;top:152px;"><svg width="90" height="90" viewBox="0 0 90 90"><rect width="90" height="90" fill="#6a2c10"/><rect x="-14.1" y="0.00" width="60.8" height="6.63" fill="#4f1e0b"/><rect x="46.4" y="0.00" width="25.7" height="6.63" fill="#4a1c0a"/><rect x="71.8" y="0.00" width="30.7" height="6.63" fill="#692b10"/><rect x="0" y="5.83" width="90" height="0.7" fill="#000" opacity="0.1"/><rect x="-28.1" y="6.43" width="42.1" height="6.63" fill="#4d1d0b"/><rect x="13.7" y="6.43" width="25.9" height="6.63" fill="#5a240d"/><rect x="39.3" y="6.43" width="33.0" height="6.63" fill="#4c1d0a"/><rect x="72.0" y="6.43" width="37.5" height="6.63" fill="#753213"/><rect x="0" y="12.26" width="90" height="0.7" fill="#000" opacity="0.1"/><rect x="-61.5" y="12.86" width="24.8" height="6.63" fill="#672a0f"/><rect x="-37.0" y="12.86" width="48.7" height="6.63" fill="#4f1e0b"/><rect x="11.5" y="12.86" width="42.2" height="6.63" fill="#702f11"/><rect x="53.4" y="12.86" width="45.6" height="6.63" fill="#59230d"/><rect x="0" y="18.69" width="90" height="0.7" fill="#000" opacity="0.1"/><rect x="-58.7" y="19.29" width="41.8" height="6.63" fill="#4b1c0a"/><rect x="-17.1" y="19.29" width="45.5" height="6.63" fill="#6f2f11"/><rect x="28.0" y="19.29" width="33.7" height="6.63" fill="#4c1d0a"/><rect x="61.5" y="19.29" width="27.7" height="6.63" fill="#60270e"/><rect x="88.9" y="19.29" width="49.9" height="6.63" fill="#703011"/><rect x="0" y="25.11" width="90" height="0.7" fill="#000" opacity="0.1"/><rect x="-52.3" y="25.71" width="42.4" height="6.63" fill="#58230d"/><rect x="-10.2" y="25.71" width="43.4" height="6.63" fill="#5f270e"/><rect x="33.0" y="25.71" width="58.4" height="6.63" fill="#6d2e11"/><rect x="0" y="31.54" width="90" height="0.7" fill="#000" opacity="0.1"/><rect x="-13.6" y="32.14" width="32.1" height="6.63" fill="#763313"/><rect x="18.1" y="32.14" width="33.0" height="6.63" fill="#672a0f"/><rect x="50.8" y="32.14" width="55.7" height="6.63" fill="#62280e"/><rect x="0" y="37.97" width="90" height="0.7" fill="#000" opacity="0.1"/><rect x="-24.6" y="38.57" width="28.9" height="6.63" fill="#713012"/><rect x="4.1" y="38.57" width="30.4" height="6.63" fill="#65290f"/><rect x="34.2" y="38.57" width="22.8" height="6.63" fill="#662a0f"/><rect x="56.7" y="38.57" width="29.1" height="6.63" fill="#63290f"/><rect x="85.5" y="38.57" width="38.7" height="6.63" fill="#682b10"/><rect x="0" y="44.40" width="90" height="0.7" fill="#000" opacity="0.1"/><rect x="-36.5" y="45.00" width="33.8" height="6.63" fill="#743112"/><rect x="-2.9" y="45.00" width="26.6" height="6.63" fill="#662a0f"/><rect x="23.3" y="45.00" width="54.6" height="6.63" fill="#6d2e11"/><rect x="77.6" y="45.00" width="61.5" height="6.63" fill="#733112"/><rect x="0" y="50.83" width="90" height="0.7" fill="#000" opacity="0.1"/><rect x="-8.7" y="51.43" width="37.8" height="6.63" fill="#6e2e11"/><rect x="28.7" y="51.43" width="36.4" height="6.63" fill="#5d260e"/><rect x="64.8" y="51.43" width="55.7" height="6.63" fill="#4c1d0a"/><rect x="0" y="57.26" width="90" height="0.7" fill="#000" opacity="0.1"/><rect x="-2.1" y="57.86" width="60.9" height="6.63" fill="#713012"/><rect x="58.6" y="57.86" width="45.5" height="6.63" fill="#4a1c0a"/><rect x="0" y="63.69" width="90" height="0.7" fill="#000" opacity="0.1"/><rect x="-27.4" y="64.29" width="25.6" height="6.63" fill="#6a2c10"/><rect x="-2.0" y="64.29" width="41.2" height="6.63" fill="#58230d"/><rect x="38.9" y="64.29" width="45.5" height="6.63" fill="#60270e"/><rect x="84.1" y="64.29" width="39.9" height="6.63" fill="#6d2e11"/><rect x="0" y="70.11" width="90" height="0.7" fill="#000" opacity="0.1"/><rect x="-29.2" y="70.71" width="38.1" height="6.63" fill="#56220c"/><rect x="8.5" y="70.71" width="30.2" height="6.63" fill="#60270e"/><rect x="38.4" y="70.71" width="51.3" height="6.63" fill="#6c2d10"/><rect x="89.4" y="70.71" width="23.2" height="6.63" fill="#53210c"/><rect x="0" y="76.54" width="90" height="0.7" fill="#000" opacity="0.1"/><rect x="-5.8" y="77.14" width="61.0" height="6.63" fill="#6a2c10"/><rect x="54.9" y="77.14" width="50.5" height="6.63" fill="#56220c"/><rect x="0" y="82.97" width="90" height="0.7" fill="#000" opacity="0.1"/><rect x="-32.6" y="83.57" width="52.1" height="6.63" fill="#5d260e"/><rect x="19.2" y="83.57" width="46.8" height="6.63" fill="#6e2e11"/><rect x="65.7" y="83.57" width="59.4" height="6.63" fill="#63280f"/><rect x="0" y="89.40" width="90" height="0.7" fill="#000" opacity="0.1"/><rect width="90" height="90" filter="url(#grain)" opacity="0.04"/><rect width="90" height="90" filter="url(#grainl)" opacity="0.03"/></svg></div><div class="lb" style="left:60.55px;width:200px;top:249.82px;letter-spacing:0.090px;">beechwood_cher...</div><div class="th" style="left:220px;top:152px;"><svg width="90" height="90" viewBox="0 0 90 90"><rect width="90" height="90" fill="#4a2a1c"/><rect x="-28.7" y="0.00" width="37.2" height="7.70" fill="#633e2d"/><rect x="8.2" y="0.00" width="22.6" height="7.70" fill="#533122"/><rect x="30.5" y="0.00" width="25.5" height="7.70" fill="#4d2c1e"/><rect x="55.7" y="0.00" width="23.9" height="7.70" fill="#4e2e1f"/><rect x="79.4" y="0.00" width="40.4" height="7.70" fill="#45271a"/><rect x="0" y="6.90" width="90" height="0.7" fill="#000" opacity="0.12"/><rect x="-14.8" y="7.50" width="26.7" height="7.70" fill="#533122"/><rect x="11.7" y="7.50" width="45.9" height="7.70" fill="#48291b"/><rect x="57.3" y="7.50" width="52.1" height="7.70" fill="#5b3828"/><rect x="0" y="14.40" width="90" height="0.7" fill="#000" opacity="0.12"/><rect x="-41.8" y="15.00" width="51.3" height="7.70" fill="#432619"/><rect x="9.2" y="15.00" width="33.0" height="7.70" fill="#3d2216"/><rect x="41.9" y="15.00" width="54.7" height="7.70" fill="#371e14"/><rect x="0" y="21.90" width="90" height="0.7" fill="#000" opacity="0.12"/><rect x="-54.5" y="22.50" width="24.5" height="7.70" fill="#4a2a1c"/><rect x="-30.3" y="22.50" width="23.2" height="7.70" fill="#533122"/><rect x="-7.4" y="22.50" width="26.8" height="7.70" fill="#442619"/><rect x="19.1" y="22.50" width="45.4" height="7.70" fill="#45271a"/><rect x="64.2" y="22.50" width="22.6" height="7.70" fill="#5f3b2a"/><rect x="86.6" y="22.50" width="23.0" height="7.70" fill="#5e3a29"/><rect x="0" y="29.40" width="90" height="0.7" fill="#000" opacity="0.12"/><rect x="-57.1" y="30.00" width="39.1" height="7.70" fill="#4d2c1e"/><rect x="-18.3" y="30.00" width="26.0" height="7.70" fill="#45271a"/><rect x="7.4" y="30.00" width="46.7" height="7.70" fill="#432619"/><rect x="53.8" y="30.00" width="44.5" height="7.70" fill="#442619"/><rect x="0" y="36.90" width="90" height="0.7" fill="#000" opacity="0.12"/><rect x="-16.6" y="37.50" width="62.1" height="7.70" fill="#442619"/><rect x="45.2" y="37.50" width="50.5" height="7.70" fill="#46271a"/><rect x="0" y="44.40" width="90" height="0.7" fill="#000" opacity="0.12"/><rect x="-37.9" y="45.00" width="24.0" height="7.70" fill="#4e2d1f"/><rect x="-14.2" y="45.00" width="45.9" height="7.70" fill="#432619"/><rect x="31.4" y="45.00" width="36.2" height="7.70" fill="#4c2b1d"/><rect x="67.3" y="45.00" width="40.4" height="7.70" fill="#543223"/><rect x="0" y="51.90" width="90" height="0.7" fill="#000" opacity="0.12"/><rect x="-35.6" y="52.50" width="23.0" height="7.70" fill="#47281b"/><rect x="-12.9" y="52.50" width="39.6" height="7.70" fill="#3c2116"/><rect x="26.5" y="52.50" width="35.3" height="7.70" fill="#603c2b"/><rect x="61.5" y="52.50" width="26.4" height="7.70" fill="#422519"/><rect x="87.6" y="52.50" width="53.5" height="7.70" fill="#4a2a1c"/><rect x="0" y="59.40" width="90" height="0.7" fill="#000" opacity="0.12"/><rect x="-44.0" y="60.00" width="32.2" height="7.70" fill="#49291b"/><rect x="-12.1" y="60.00" width="31.5" height="7.70" fill="#48291b"/><rect x="19.2" y="60.00" width="37.2" height="7.70" fill="#48291b"/><rect x="56.1" y="60.00" width="49.0" height="7.70" fill="#381e14"/><rect x="0" y="66.90" width="90" height="0.7" fill="#000" opacity="0.12"/><rect x="-16.1" y="67.50" width="24.3" height="7.70" fill="#45271a"/><rect x="8.0" y="67.50" width="60.2" height="7.70" fill="#4c2c1e"/><rect x="67.8" y="67.50" width="22.8" height="7.70" fill="#5a3727"/><rect x="0" y="74.40" width="90" height="0.7" fill="#000" opacity="0.12"/><rect x="-24.1" y="75.00" width="46.8" height="7.70" fill="#48291b"/><rect x="22.4" y="75.00" width="27.9" height="7.70" fill="#442619"/><rect x="50.0" y="75.00" width="25.8" height="7.70" fill="#4e2d1f"/><rect x="75.4" y="75.00" width="24.9" height="7.70" fill="#4e2e1f"/><rect x="0" y="81.90" width="90" height="0.7" fill="#000" opacity="0.12"/><rect x="-47.4" y="82.50" width="37.6" height="7.70" fill="#45271a"/><rect x="-10.1" y="82.50" width="50.9" height="7.70" fill="#523121"/><rect x="40.6" y="82.50" width="42.1" height="7.70" fill="#583525"/><rect x="82.3" y="82.50" width="43.5" height="7.70" fill="#3a2015"/><rect x="0" y="89.40" width="90" height="0.7" fill="#000" opacity="0.12"/><rect width="90" height="90" filter="url(#grain)" opacity="0.04"/><rect width="90" height="90" filter="url(#grainl)" opacity="0.03"/></svg></div><div class="lb" style="left:165.58px;width:200px;top:249.82px;letter-spacing:0.170px;">beechwood_cho...</div><div class="th" style="left:325px;top:152px;"><svg width="90" height="90" viewBox="0 0 90 90"><rect width="90" height="90" fill="#e0a458"/><rect x="0.0" y="0.00" width="30.3" height="7.28" fill="#ce8138"/><rect x="30.0" y="0.00" width="45.0" height="7.28" fill="#e2a75b"/><rect x="74.6" y="0.00" width="15.7" height="7.28" fill="#c17536"/><rect x="0" y="6.58" width="90" height="0.6" fill="#000" opacity="0.05"/><rect x="0.0" y="7.08" width="42.2" height="7.83" fill="#e3a95c"/><rect x="41.9" y="7.08" width="48.4" height="7.83" fill="#cc7e37"/><rect x="0" y="14.21" width="90" height="0.6" fill="#000" opacity="0.05"/><rect x="0.0" y="14.71" width="18.3" height="7.83" fill="#de9f52"/><rect x="18.0" y="14.71" width="47.7" height="7.83" fill="#e5af62"/><rect x="65.4" y="14.71" width="24.9" height="7.83" fill="#e3ab63"/><rect x="0" y="21.84" width="90" height="0.6" fill="#000" opacity="0.05"/><rect x="0.0" y="22.34" width="51.5" height="7.83" fill="#e2a558"/><rect x="51.2" y="22.34" width="39.1" height="7.83" fill="#da994d"/><rect x="0" y="29.46" width="90" height="0.6" fill="#000" opacity="0.05"/><rect x="0.0" y="29.96" width="25.4" height="7.28" fill="#e3a85b"/><rect x="25.1" y="29.96" width="45.0" height="7.28" fill="#ca7934"/><rect x="69.7" y="29.96" width="20.6" height="7.28" fill="#db9b4e"/><rect x="0" y="36.55" width="90" height="0.6" fill="#000" opacity="0.05"/><rect x="0.0" y="37.05" width="43.9" height="7.83" fill="#e0a255"/><rect x="43.6" y="37.05" width="46.7" height="7.83" fill="#e3af67"/><rect x="0" y="44.17" width="90" height="0.6" fill="#000" opacity="0.05"/><rect x="0.0" y="44.67" width="10.7" height="7.83" fill="#da9b53"/><rect x="10.4" y="44.67" width="45.5" height="7.83" fill="#c67634"/><rect x="55.6" y="44.67" width="34.7" height="7.83" fill="#e5ab5c"/><rect x="0" y="51.80" width="90" height="0.6" fill="#000" opacity="0.05"/><rect x="0.0" y="52.30" width="34.6" height="7.83" fill="#ca7b36"/><rect x="34.3" y="52.30" width="46.1" height="7.83" fill="#e2a759"/><rect x="80.1" y="52.30" width="10.2" height="7.83" fill="#c77533"/><rect x="0" y="59.43" width="90" height="0.6" fill="#000" opacity="0.05"/><rect x="0.0" y="59.93" width="18.3" height="7.28" fill="#e3a859"/><rect x="18.0" y="59.93" width="46.6" height="7.28" fill="#e0a559"/><rect x="64.3" y="59.93" width="26.0" height="7.28" fill="#e5ab5e"/><rect x="0" y="66.51" width="90" height="0.6" fill="#000" opacity="0.05"/><rect x="0.0" y="67.01" width="42.8" height="8.37" fill="#cc7e37"/><rect x="42.5" y="67.01" width="45.0" height="8.37" fill="#dfa055"/><rect x="87.2" y="67.01" width="3.1" height="8.37" fill="#d39248"/><rect x="0" y="74.68" width="90" height="0.6" fill="#000" opacity="0.05"/><rect x="0.0" y="75.18" width="19.9" height="7.28" fill="#e3a859"/><rect x="19.6" y="75.18" width="46.1" height="7.28" fill="#da9b50"/><rect x="65.4" y="75.18" width="24.9" height="7.28" fill="#e3ab62"/><rect x="0" y="81.76" width="90" height="0.6" fill="#000" opacity="0.05"/><rect x="0.0" y="82.26" width="53.7" height="7.94" fill="#e5ab5c"/><rect x="53.4" y="82.26" width="36.9" height="7.94" fill="#db9b4e"/><rect x="0" y="89.50" width="90" height="0.6" fill="#000" opacity="0.05"/><rect width="90" height="90" filter="url(#grain)" opacity="0.05"/><rect width="90" height="90" filter="url(#grainl)" opacity="0.04"/></svg></div><div class="lb" style="left:270.57px;width:200px;top:249.82px;letter-spacing:0.138px;">beechwood_gall...</div><div class="th" style="left:430px;top:152px;"><svg width="90" height="90" viewBox="0 0 90 90"><rect width="90" height="90" fill="#a4461f"/><rect x="-28.0" y="0.00" width="44.7" height="5.83" fill="#a3461f"/><rect x="16.3" y="0.00" width="42.6" height="5.83" fill="#9f431d"/><rect x="58.7" y="0.00" width="42.8" height="5.83" fill="#a74921"/><rect x="0" y="5.03" width="90" height="0.7" fill="#000" opacity="0.06"/><rect x="-5.8" y="5.62" width="34.4" height="5.83" fill="#b05227"/><rect x="28.3" y="5.62" width="50.0" height="5.83" fill="#b15328"/><rect x="78.0" y="5.62" width="60.9" height="5.83" fill="#a54720"/><rect x="0" y="10.65" width="90" height="0.7" fill="#000" opacity="0.06"/><rect x="-9.8" y="11.25" width="22.9" height="5.83" fill="#9d421d"/><rect x="12.8" y="11.25" width="29.9" height="5.83" fill="#99401c"/><rect x="42.4" y="11.25" width="40.9" height="5.83" fill="#a84a22"/><rect x="83.0" y="11.25" width="43.1" height="5.83" fill="#a4461f"/><rect x="0" y="16.27" width="90" height="0.7" fill="#000" opacity="0.06"/><rect x="-41.1" y="16.88" width="40.6" height="5.83" fill="#903a19"/><rect x="-0.8" y="16.88" width="62.1" height="5.83" fill="#a64821"/><rect x="61.0" y="16.88" width="34.9" height="5.83" fill="#973e1b"/><rect x="0" y="21.90" width="90" height="0.7" fill="#000" opacity="0.06"/><rect x="-4.4" y="22.50" width="53.0" height="5.83" fill="#a84a22"/><rect x="48.3" y="22.50" width="37.8" height="5.83" fill="#a84a22"/><rect x="85.8" y="22.50" width="22.3" height="5.83" fill="#913b19"/><rect x="0" y="27.52" width="90" height="0.7" fill="#000" opacity="0.06"/><rect x="-29.1" y="28.12" width="61.5" height="5.83" fill="#99401c"/><rect x="32.1" y="28.12" width="47.5" height="5.83" fill="#a0441e"/><rect x="79.3" y="28.12" width="25.8" height="5.83" fill="#903a19"/><rect x="0" y="33.15" width="90" height="0.7" fill="#000" opacity="0.06"/><rect x="-47.0" y="33.75" width="27.0" height="5.83" fill="#993f1c"/><rect x="-20.3" y="33.75" width="24.7" height="5.83" fill="#9f431d"/><rect x="4.1" y="33.75" width="44.7" height="5.83" fill="#9f431e"/><rect x="48.5" y="33.75" width="51.6" height="5.83" fill="#af5127"/><rect x="0" y="38.77" width="90" height="0.7" fill="#000" opacity="0.06"/><rect x="-7.2" y="39.38" width="39.1" height="5.83" fill="#973e1b"/><rect x="31.6" y="39.38" width="61.1" height="5.83" fill="#a1441e"/><rect x="0" y="44.40" width="90" height="0.7" fill="#000" opacity="0.06"/><rect x="-54.9" y="45.00" width="30.7" height="5.83" fill="#913b19"/><rect x="-24.4" y="45.00" width="48.0" height="5.83" fill="#b25428"/><rect x="23.2" y="45.00" width="30.8" height="5.83" fill="#923b1a"/><rect x="53.8" y="45.00" width="35.5" height="5.83" fill="#99401c"/><rect x="88.9" y="45.00" width="25.9" height="5.83" fill="#a0441e"/><rect x="0" y="50.02" width="90" height="0.7" fill="#000" opacity="0.06"/><rect x="-37.3" y="50.62" width="37.2" height="5.83" fill="#a94b22"/><rect x="-0.4" y="50.62" width="41.6" height="5.83" fill="#a84a22"/><rect x="40.9" y="50.62" width="29.6" height="5.83" fill="#913b19"/><rect x="70.3" y="50.62" width="55.0" height="5.83" fill="#983f1b"/><rect x="0" y="55.65" width="90" height="0.7" fill="#000" opacity="0.06"/><rect x="-45.8" y="56.25" width="59.9" height="5.83" fill="#903a19"/><rect x="13.8" y="56.25" width="57.6" height="5.83" fill="#a3451f"/><rect x="71.1" y="56.25" width="26.5" height="5.83" fill="#b15328"/><rect x="0" y="61.27" width="90" height="0.7" fill="#000" opacity="0.06"/><rect x="-14.8" y="61.88" width="50.5" height="5.83" fill="#913b1a"/><rect x="35.4" y="61.88" width="46.2" height="5.83" fill="#983f1c"/><rect x="81.3" y="61.88" width="51.1" height="5.83" fill="#ac4e25"/><rect x="0" y="66.90" width="90" height="0.7" fill="#000" opacity="0.06"/><rect x="-34.7" y="67.50" width="56.4" height="5.83" fill="#a0441e"/><rect x="21.4" y="67.50" width="59.0" height="5.83" fill="#9a401c"/><rect x="80.1" y="67.50" width="33.1" height="5.83" fill="#9d421d"/><rect x="0" y="72.53" width="90" height="0.7" fill="#000" opacity="0.06"/><rect x="-10.9" y="73.12" width="37.1" height="5.83" fill="#9e421d"/><rect x="25.8" y="73.12" width="36.8" height="5.83" fill="#a94b23"/><rect x="62.3" y="73.12" width="48.6" height="5.83" fill="#a54720"/><rect x="0" y="78.15" width="90" height="0.7" fill="#000" opacity="0.06"/><rect x="-8.7" y="78.75" width="23.7" height="5.83" fill="#b15328"/><rect x="14.7" y="78.75" width="50.3" height="5.83" fill="#9c411d"/><rect x="64.7" y="78.75" width="47.7" height="5.83" fill="#a74921"/><rect x="0" y="83.78" width="90" height="0.7" fill="#000" opacity="0.06"/><rect x="-19.8" y="84.38" width="62.3" height="5.83" fill="#af5126"/><rect x="42.2" y="84.38" width="51.8" height="5.83" fill="#a74921"/><rect x="0" y="89.40" width="90" height="0.7" fill="#000" opacity="0.06"/><rect width="90" height="90" filter="url(#grain)" opacity="0.06"/><rect width="90" height="90" filter="url(#grainl)" opacity="0.05"/></svg></div><div class="lb" style="left:375.61px;width:200px;top:249.82px;letter-spacing:0.228px;">beechwood_gro...</div><div class="th" style="left:535px;top:152px;"><svg width="90" height="90" viewBox="0 0 90 90"><rect width="90" height="90" fill="#9a6424"/><rect x="0.0" y="0.00" width="48.2" height="7.83" fill="#925c1f"/><rect x="47.9" y="0.00" width="33.0" height="7.83" fill="#7b4717"/><rect x="80.6" y="0.00" width="9.7" height="7.83" fill="#905a1f"/><rect x="0" y="7.13" width="90" height="0.6" fill="#000" opacity="0.06"/><rect x="0.0" y="7.63" width="58.0" height="8.92" fill="#946022"/><rect x="57.7" y="7.63" width="32.6" height="8.92" fill="#925e21"/><rect x="0" y="15.84" width="90" height="0.6" fill="#000" opacity="0.06"/><rect x="0.0" y="16.34" width="39.5" height="7.83" fill="#9a6627"/><rect x="39.2" y="16.34" width="28.6" height="7.83" fill="#814e1d"/><rect x="67.6" y="16.34" width="22.7" height="7.83" fill="#935e22"/><rect x="0" y="23.47" width="90" height="0.6" fill="#000" opacity="0.06"/><rect x="0.0" y="23.97" width="18.8" height="8.37" fill="#8c5a23"/><rect x="18.5" y="23.97" width="29.7" height="8.37" fill="#784519"/><rect x="47.9" y="23.97" width="42.4" height="8.37" fill="#9a6726"/><rect x="0" y="31.64" width="90" height="0.6" fill="#000" opacity="0.06"/><rect x="0.0" y="32.14" width="10.1" height="8.37" fill="#8c5a22"/><rect x="9.8" y="32.14" width="80.5" height="8.37" fill="#925e21"/><rect x="0" y="39.81" width="90" height="0.6" fill="#000" opacity="0.06"/><rect x="0.0" y="40.31" width="72.2" height="8.37" fill="#925e22"/><rect x="71.9" y="40.31" width="18.4" height="8.37" fill="#855623"/><rect x="0" y="47.99" width="90" height="0.6" fill="#000" opacity="0.06"/><rect x="0.0" y="48.49" width="16.6" height="8.37" fill="#8f5c22"/><rect x="16.3" y="48.49" width="10.1" height="8.37" fill="#855627"/><rect x="26.2" y="48.49" width="43.9" height="8.37" fill="#946022"/><rect x="69.7" y="48.49" width="20.6" height="8.37" fill="#7d4a1a"/><rect x="0" y="56.16" width="90" height="0.6" fill="#000" opacity="0.06"/><rect x="0.0" y="56.66" width="25.4" height="8.37" fill="#905c21"/><rect x="25.1" y="56.66" width="28.6" height="8.37" fill="#7c4919"/><rect x="53.4" y="56.66" width="36.9" height="8.37" fill="#976427"/><rect x="0" y="64.33" width="90" height="0.6" fill="#000" opacity="0.06"/><rect x="0.0" y="64.83" width="37.3" height="8.37" fill="#88561e"/><rect x="37.0" y="64.83" width="43.9" height="8.37" fill="#946022"/><rect x="80.6" y="64.83" width="9.7" height="8.37" fill="#855625"/><rect x="0" y="72.50" width="90" height="0.6" fill="#000" opacity="0.06"/><rect x="0.0" y="73.00" width="11.2" height="8.37" fill="#925c1f"/><rect x="10.9" y="73.00" width="6.8" height="8.37" fill="#7f4a19"/><rect x="17.4" y="73.00" width="72.9" height="8.37" fill="#925c1f"/><rect x="0" y="80.67" width="90" height="0.6" fill="#000" opacity="0.06"/><rect x="0.0" y="81.17" width="90.3" height="9.03" fill="#966021"/><rect x="0" y="89.50" width="90" height="0.6" fill="#000" opacity="0.06"/><rect width="90" height="90" filter="url(#grain)" opacity="0.05"/><rect width="90" height="90" filter="url(#grainl)" opacity="0.04"/></svg></div><div class="lb" style="left:480.56px;width:200px;top:249.82px;letter-spacing:0.130px;">beechwood_gun...</div><div class="th" style="left:10px;top:300px;"><svg width="90" height="90" viewBox="0 0 90 90"><rect width="90" height="90" fill="#d6843a"/><rect x="0.0" y="0.00" width="15.6" height="5.65" fill="#ca7332"/><rect x="15.3" y="0.00" width="75.0" height="5.65" fill="#d4823a"/><rect x="0" y="4.95" width="90" height="0.6" fill="#000" opacity="0.04"/><rect x="0.0" y="5.45" width="35.2" height="5.65" fill="#c76e2e"/><rect x="34.9" y="5.45" width="46.1" height="5.65" fill="#d8893f"/><rect x="80.6" y="5.45" width="9.7" height="5.65" fill="#ce7a35"/><rect x="0" y="10.40" width="90" height="0.6" fill="#000" opacity="0.04"/><rect x="0.0" y="10.90" width="90.3" height="5.65" fill="#db8c41"/><rect x="0" y="15.84" width="90" height="0.6" fill="#000" opacity="0.04"/><rect x="0.0" y="16.34" width="16.6" height="5.65" fill="#d8893f"/><rect x="16.3" y="16.34" width="19.9" height="5.65" fill="#ce7c37"/><rect x="36.0" y="16.34" width="54.3" height="5.65" fill="#d98b3f"/><rect x="0" y="21.29" width="90" height="0.6" fill="#000" opacity="0.04"/><rect x="0.0" y="21.79" width="41.7" height="6.19" fill="#c76e2e"/><rect x="41.4" y="21.79" width="43.9" height="6.19" fill="#ca7330"/><rect x="85.0" y="21.79" width="5.3" height="6.19" fill="#d4843a"/><rect x="0" y="27.28" width="90" height="0.6" fill="#000" opacity="0.04"/><rect x="0.0" y="27.78" width="27.5" height="6.19" fill="#cc7633"/><rect x="27.2" y="27.78" width="41.7" height="6.19" fill="#d17d37"/><rect x="68.6" y="27.78" width="21.7" height="6.19" fill="#ca7332"/><rect x="0" y="33.28" width="90" height="0.6" fill="#000" opacity="0.04"/><rect x="0.0" y="33.78" width="90.3" height="6.19" fill="#de9344"/><rect x="0" y="39.27" width="90" height="0.6" fill="#000" opacity="0.04"/><rect x="0.0" y="39.77" width="18.8" height="5.65" fill="#db8e41"/><rect x="18.5" y="39.77" width="45.0" height="5.65" fill="#c3692c"/><rect x="63.2" y="39.77" width="27.1" height="5.65" fill="#db9042"/><rect x="0" y="44.72" width="90" height="0.6" fill="#000" opacity="0.04"/><rect x="0.0" y="45.22" width="46.1" height="5.10" fill="#db8e41"/><rect x="45.8" y="45.22" width="29.7" height="5.10" fill="#c87030"/><rect x="75.2" y="45.22" width="15.1" height="5.10" fill="#db8e41"/><rect x="0" y="49.62" width="90" height="0.6" fill="#000" opacity="0.04"/><rect x="0.0" y="50.12" width="6.8" height="6.74" fill="#d8893d"/><rect x="6.5" y="50.12" width="45.0" height="6.74" fill="#ca7332"/><rect x="51.2" y="50.12" width="39.1" height="6.74" fill="#d98b3f"/><rect x="0" y="56.16" width="90" height="0.6" fill="#000" opacity="0.04"/><rect x="0.0" y="56.66" width="78.8" height="5.65" fill="#d4843a"/><rect x="78.5" y="56.66" width="11.8" height="5.65" fill="#c76e2e"/><rect x="0" y="61.61" width="90" height="0.6" fill="#000" opacity="0.04"/><rect x="0.0" y="62.11" width="43.9" height="5.65" fill="#d17d37"/><rect x="43.6" y="62.11" width="46.7" height="5.65" fill="#ce7835"/><rect x="0" y="67.05" width="90" height="0.6" fill="#000" opacity="0.04"/><rect x="0.0" y="67.55" width="13.4" height="5.65" fill="#d4843a"/><rect x="13.1" y="67.55" width="48.2" height="5.65" fill="#c87130"/><rect x="61.0" y="67.55" width="29.3" height="5.65" fill="#d17d38"/><rect x="0" y="72.50" width="90" height="0.6" fill="#000" opacity="0.04"/><rect x="0.0" y="73.00" width="29.7" height="5.65" fill="#dd9042"/><rect x="29.4" y="73.00" width="38.4" height="5.65" fill="#ca7533"/><rect x="67.6" y="73.00" width="22.7" height="5.65" fill="#d8893d"/><rect x="0" y="77.95" width="90" height="0.6" fill="#000" opacity="0.04"/><rect x="0.0" y="78.45" width="30.8" height="6.19" fill="#d8893d"/><rect x="30.5" y="78.45" width="22.1" height="6.19" fill="#ce7c37"/><rect x="52.3" y="78.45" width="38.0" height="6.19" fill="#d8893d"/><rect x="0" y="83.94" width="90" height="0.6" fill="#000" opacity="0.04"/><rect x="0.0" y="84.44" width="33.0" height="5.76" fill="#db8e41"/><rect x="32.7" y="84.44" width="46.1" height="5.76" fill="#c87132"/><rect x="78.5" y="84.44" width="11.8" height="5.76" fill="#d8893d"/><rect x="0" y="89.50" width="90" height="0.6" fill="#000" opacity="0.04"/><rect width="90" height="90" filter="url(#grain)" opacity="0.05"/><rect width="90" height="90" filter="url(#grainl)" opacity="0.04"/></svg></div><div class="lb" style="left:-44.44px;width:200px;top:397.82px;letter-spacing:0.130px;">beechwood_hon...</div><div class="th" style="left:115px;top:300px;"><svg width="90" height="90" viewBox="0 0 90 90"><rect width="90" height="90" fill="#8a5c34"/><rect x="-6.6" y="0.00" width="50.4" height="7.12" fill="#8f6037"/><rect x="43.5" y="0.00" width="33.1" height="7.12" fill="#7b502c"/><rect x="76.3" y="0.00" width="48.6" height="7.12" fill="#7b502c"/><rect x="0" y="6.32" width="90" height="0.7" fill="#000" opacity="0.1"/><rect x="-24.6" y="6.92" width="53.4" height="7.12" fill="#926339"/><rect x="28.5" y="6.92" width="58.4" height="7.12" fill="#7f532e"/><rect x="86.6" y="6.92" width="54.5" height="7.12" fill="#855831"/><rect x="0" y="13.25" width="90" height="0.7" fill="#000" opacity="0.1"/><rect x="-34.2" y="13.85" width="48.9" height="7.12" fill="#95653b"/><rect x="14.4" y="13.85" width="27.2" height="7.12" fill="#80542f"/><rect x="41.3" y="13.85" width="30.5" height="7.12" fill="#895b33"/><rect x="71.5" y="13.85" width="61.9" height="7.12" fill="#8b5d35"/><rect x="0" y="20.17" width="90" height="0.7" fill="#000" opacity="0.1"/><rect x="-54.1" y="20.77" width="49.8" height="7.12" fill="#94653a"/><rect x="-4.6" y="20.77" width="47.6" height="7.12" fill="#80542f"/><rect x="42.7" y="20.77" width="57.3" height="7.12" fill="#865832"/><rect x="0" y="27.09" width="90" height="0.7" fill="#000" opacity="0.1"/><rect x="-28.1" y="27.69" width="31.0" height="7.12" fill="#8a5c34"/><rect x="2.7" y="27.69" width="26.4" height="7.12" fill="#845731"/><rect x="28.8" y="27.69" width="33.5" height="7.12" fill="#95663b"/><rect x="62.0" y="27.69" width="26.9" height="7.12" fill="#845731"/><rect x="88.5" y="27.69" width="41.5" height="7.12" fill="#8a5c34"/><rect x="0" y="34.02" width="90" height="0.7" fill="#000" opacity="0.1"/><rect x="-28.2" y="34.62" width="41.7" height="7.12" fill="#8b5d35"/><rect x="13.2" y="34.62" width="26.1" height="7.12" fill="#865932"/><rect x="39.0" y="34.62" width="56.9" height="7.12" fill="#845731"/><rect x="0" y="40.94" width="90" height="0.7" fill="#000" opacity="0.1"/><rect x="-8.9" y="41.54" width="50.4" height="7.12" fill="#835630"/><rect x="41.3" y="41.54" width="50.5" height="7.12" fill="#895b33"/><rect x="0" y="47.86" width="90" height="0.7" fill="#000" opacity="0.1"/><rect x="-21.5" y="48.46" width="45.1" height="7.12" fill="#875932"/><rect x="23.2" y="48.46" width="34.4" height="7.12" fill="#7c502c"/><rect x="57.3" y="48.46" width="41.1" height="7.12" fill="#7e522d"/><rect x="0" y="54.78" width="90" height="0.7" fill="#000" opacity="0.1"/><rect x="-2.2" y="55.38" width="34.8" height="7.12" fill="#8b5d35"/><rect x="32.3" y="55.38" width="33.6" height="7.12" fill="#885a33"/><rect x="65.6" y="55.38" width="32.4" height="7.12" fill="#916239"/><rect x="0" y="61.71" width="90" height="0.7" fill="#000" opacity="0.1"/><rect x="-12.3" y="62.31" width="31.5" height="7.12" fill="#875932"/><rect x="18.9" y="62.31" width="32.2" height="7.12" fill="#8e6037"/><rect x="50.8" y="62.31" width="34.0" height="7.12" fill="#885a33"/><rect x="84.5" y="62.31" width="44.7" height="7.12" fill="#8f6037"/><rect x="0" y="68.63" width="90" height="0.7" fill="#000" opacity="0.1"/><rect x="-47.0" y="69.23" width="42.6" height="7.12" fill="#885a33"/><rect x="-4.6" y="69.23" width="37.7" height="7.12" fill="#8a5c34"/><rect x="32.7" y="69.23" width="53.2" height="7.12" fill="#794e2b"/><rect x="85.7" y="69.23" width="46.8" height="7.12" fill="#794e2b"/><rect x="0" y="75.55" width="90" height="0.7" fill="#000" opacity="0.1"/><rect x="-29.1" y="76.15" width="35.9" height="7.12" fill="#80542f"/><rect x="6.5" y="76.15" width="30.3" height="7.12" fill="#855831"/><rect x="36.5" y="76.15" width="32.6" height="7.12" fill="#8a5c34"/><rect x="68.9" y="76.15" width="37.5" height="7.12" fill="#875932"/><rect x="0" y="82.48" width="90" height="0.7" fill="#000" opacity="0.1"/><rect x="-22.9" y="83.08" width="39.3" height="7.12" fill="#926339"/><rect x="16.1" y="83.08" width="28.2" height="7.12" fill="#855831"/><rect x="44.0" y="83.08" width="49.0" height="7.12" fill="#7c502c"/><rect x="0" y="89.40" width="90" height="0.7" fill="#000" opacity="0.1"/><rect width="90" height="90" filter="url(#grain)" opacity="0.06"/><rect width="90" height="90" filter="url(#grainl)" opacity="0.05"/></svg></div><div class="lb" style="left:60.53px;width:200px;top:397.82px;letter-spacing:0.068px;">beechwood_java...</div><div class="th" style="left:220px;top:300px;"><svg width="90" height="90" viewBox="0 0 90 90"><rect width="90" height="90" fill="#33261e"/><rect x="-59.8" y="0.00" width="22.8" height="7.70" fill="#2f231b"/><rect x="-37.4" y="0.00" width="61.8" height="7.70" fill="#433329"/><rect x="24.1" y="0.00" width="49.6" height="7.70" fill="#3a2c23"/><rect x="73.3" y="0.00" width="31.9" height="7.70" fill="#281c15"/><rect x="0" y="6.90" width="90" height="0.7" fill="#000" opacity="0.16"/><rect x="-17.4" y="7.50" width="32.8" height="7.70" fill="#271b15"/><rect x="15.1" y="7.50" width="57.3" height="7.70" fill="#30231c"/><rect x="72.1" y="7.50" width="59.3" height="7.70" fill="#30231c"/><rect x="0" y="14.40" width="90" height="0.7" fill="#000" opacity="0.16"/><rect x="-28.2" y="15.00" width="39.1" height="7.70" fill="#403127"/><rect x="10.6" y="15.00" width="36.7" height="7.70" fill="#392b22"/><rect x="47.0" y="15.00" width="48.1" height="7.70" fill="#382a21"/><rect x="0" y="21.90" width="90" height="0.7" fill="#000" opacity="0.16"/><rect x="-61.7" y="22.50" width="41.9" height="7.70" fill="#2e211a"/><rect x="-20.1" y="22.50" width="27.9" height="7.70" fill="#43342a"/><rect x="7.5" y="22.50" width="49.9" height="7.70" fill="#31241c"/><rect x="57.1" y="22.50" width="42.1" height="7.70" fill="#2f221b"/><rect x="0" y="29.40" width="90" height="0.7" fill="#000" opacity="0.16"/><rect x="-7.2" y="30.00" width="24.2" height="7.70" fill="#382a21"/><rect x="16.7" y="30.00" width="44.5" height="7.70" fill="#33261e"/><rect x="60.9" y="30.00" width="29.5" height="7.70" fill="#31251d"/><rect x="0" y="36.90" width="90" height="0.7" fill="#000" opacity="0.16"/><rect x="-14.6" y="37.50" width="34.7" height="7.70" fill="#31241d"/><rect x="19.9" y="37.50" width="58.5" height="7.70" fill="#2a1d17"/><rect x="78.1" y="37.50" width="25.3" height="7.70" fill="#372921"/><rect x="0" y="44.40" width="90" height="0.7" fill="#000" opacity="0.16"/><rect x="-29.4" y="45.00" width="26.9" height="7.70" fill="#32251d"/><rect x="-2.8" y="45.00" width="55.9" height="7.70" fill="#362920"/><rect x="52.8" y="45.00" width="33.8" height="7.70" fill="#433329"/><rect x="86.3" y="45.00" width="60.1" height="7.70" fill="#403027"/><rect x="0" y="51.90" width="90" height="0.7" fill="#000" opacity="0.16"/><rect x="-29.8" y="52.50" width="61.4" height="7.70" fill="#3c2d24"/><rect x="31.2" y="52.50" width="56.0" height="7.70" fill="#33261e"/><rect x="87.0" y="52.50" width="53.4" height="7.70" fill="#362820"/><rect x="0" y="59.40" width="90" height="0.7" fill="#000" opacity="0.16"/><rect x="-15.8" y="60.00" width="25.7" height="7.70" fill="#3e2f26"/><rect x="9.5" y="60.00" width="48.2" height="7.70" fill="#2a1e17"/><rect x="57.5" y="60.00" width="47.0" height="7.70" fill="#34271f"/><rect x="0" y="66.90" width="90" height="0.7" fill="#000" opacity="0.16"/><rect x="-19.3" y="67.50" width="55.2" height="7.70" fill="#382a22"/><rect x="35.5" y="67.50" width="58.0" height="7.70" fill="#413228"/><rect x="0" y="74.40" width="90" height="0.7" fill="#000" opacity="0.16"/><rect x="-21.6" y="75.00" width="37.8" height="7.70" fill="#2f231b"/><rect x="16.0" y="75.00" width="32.3" height="7.70" fill="#31241d"/><rect x="47.9" y="75.00" width="58.8" height="7.70" fill="#31241d"/><rect x="0" y="81.90" width="90" height="0.7" fill="#000" opacity="0.16"/><rect x="-19.8" y="82.50" width="46.5" height="7.70" fill="#31241d"/><rect x="26.4" y="82.50" width="24.7" height="7.70" fill="#433329"/><rect x="50.8" y="82.50" width="51.5" height="7.70" fill="#433329"/><rect x="0" y="89.40" width="90" height="0.7" fill="#000" opacity="0.16"/><rect width="90" height="90" filter="url(#grain)" opacity="0.05"/><rect width="90" height="90" filter="url(#grainl)" opacity="0.04"/></svg></div><div class="lb" style="left:165.58px;width:200px;top:397.82px;letter-spacing:0.152px;">beechwood_mu...</div><div class="th" style="left:325px;top:300px;"><svg width="90" height="90" viewBox="0 0 90 90"><rect width="90" height="90" fill="#e2a85c"/><rect x="0.0" y="0.00" width="90.3" height="7.28" fill="#e2a85c"/><rect x="0" y="6.58" width="90" height="0.6" fill="#000" opacity="0.04"/><rect x="0.0" y="7.08" width="13.4" height="7.83" fill="#e4ab5f"/><rect x="13.1" y="7.08" width="45.0" height="7.83" fill="#da9c52"/><rect x="57.7" y="7.08" width="32.6" height="7.83" fill="#dfa559"/><rect x="0" y="14.21" width="90" height="0.6" fill="#000" opacity="0.04"/><rect x="0.0" y="14.71" width="26.5" height="7.28" fill="#d6954d"/><rect x="26.2" y="14.71" width="45.0" height="7.28" fill="#eab976"/><rect x="70.8" y="14.71" width="19.5" height="7.28" fill="#cf8e48"/><rect x="0" y="21.29" width="90" height="0.6" fill="#000" opacity="0.04"/><rect x="0.0" y="21.79" width="2.5" height="7.83" fill="#da9c52"/><rect x="2.2" y="21.79" width="46.1" height="7.83" fill="#eab774"/><rect x="47.9" y="21.79" width="42.4" height="7.83" fill="#d8974d"/><rect x="0" y="28.92" width="90" height="0.6" fill="#000" opacity="0.04"/><rect x="0.0" y="29.42" width="78.8" height="7.83" fill="#e2a85e"/><rect x="78.5" y="29.42" width="11.8" height="7.83" fill="#dfa35a"/><rect x="0" y="36.55" width="90" height="0.6" fill="#000" opacity="0.04"/><rect x="0.0" y="37.05" width="11.2" height="7.83" fill="#dfa359"/><rect x="10.9" y="37.05" width="46.1" height="7.83" fill="#e9b46f"/><rect x="56.7" y="37.05" width="33.6" height="7.83" fill="#e2aa5f"/><rect x="0" y="44.17" width="90" height="0.6" fill="#000" opacity="0.04"/><rect x="0.0" y="44.67" width="36.3" height="7.28" fill="#dda055"/><rect x="36.0" y="44.67" width="46.1" height="7.28" fill="#e0a65c"/><rect x="81.7" y="44.67" width="8.6" height="7.28" fill="#cf8e48"/><rect x="0" y="51.26" width="90" height="0.6" fill="#000" opacity="0.04"/><rect x="0.0" y="51.76" width="2.5" height="7.83" fill="#dfa359"/><rect x="2.2" y="51.76" width="45.0" height="7.83" fill="#eab774"/><rect x="46.9" y="51.76" width="43.4" height="7.83" fill="#e2a85c"/><rect x="0" y="58.88" width="90" height="0.6" fill="#000" opacity="0.04"/><rect x="0.0" y="59.38" width="30.8" height="7.83" fill="#e0a65c"/><rect x="30.5" y="59.38" width="43.9" height="7.83" fill="#dda054"/><rect x="74.1" y="59.38" width="16.2" height="7.83" fill="#e2a85c"/><rect x="0" y="66.51" width="90" height="0.6" fill="#000" opacity="0.04"/><rect x="0.0" y="67.01" width="46.1" height="7.83" fill="#d6974d"/><rect x="45.8" y="67.01" width="44.5" height="7.83" fill="#eab977"/><rect x="0" y="74.14" width="90" height="0.6" fill="#000" opacity="0.04"/><rect x="0.0" y="74.64" width="26.5" height="7.83" fill="#dfa359"/><rect x="26.2" y="74.64" width="31.9" height="7.83" fill="#cf8d44"/><rect x="57.7" y="74.64" width="32.6" height="7.83" fill="#e2a85e"/><rect x="0" y="81.76" width="90" height="0.6" fill="#000" opacity="0.04"/><rect x="0.0" y="82.26" width="26.5" height="7.94" fill="#e2a85c"/><rect x="26.2" y="82.26" width="45.0" height="7.94" fill="#e9b670"/><rect x="70.8" y="82.26" width="19.5" height="7.94" fill="#e0a55a"/><rect x="0" y="89.50" width="90" height="0.6" fill="#000" opacity="0.04"/><rect width="90" height="90" filter="url(#grain)" opacity="0.05"/><rect width="90" height="90" filter="url(#grainl)" opacity="0.04"/></svg></div><div class="lb" style="left:270.50px;width:200px;top:397.82px;letter-spacing:-0.006px;">beechwood_natu...</div><div class="th" style="left:430px;top:300px;"><svg width="90" height="90" viewBox="0 0 90 90"><rect width="90" height="90" fill="#a44e30"/><rect x="-32.4" y="0.00" width="54.6" height="7.12" fill="#a14b2e"/><rect x="21.9" y="0.00" width="52.9" height="7.12" fill="#a65032"/><rect x="74.5" y="0.00" width="26.7" height="7.12" fill="#b05a3c"/><rect x="0" y="6.32" width="90" height="0.7" fill="#000" opacity="0.08"/><rect x="-46.3" y="6.92" width="32.4" height="7.12" fill="#a14c2e"/><rect x="-14.2" y="6.92" width="56.2" height="7.12" fill="#a34d2f"/><rect x="41.7" y="6.92" width="62.2" height="7.12" fill="#b35d3f"/><rect x="0" y="13.25" width="90" height="0.7" fill="#000" opacity="0.08"/><rect x="-54.3" y="13.85" width="28.3" height="7.12" fill="#a54f31"/><rect x="-26.2" y="13.85" width="60.5" height="7.12" fill="#964227"/><rect x="34.0" y="13.85" width="57.6" height="7.12" fill="#a14c2e"/><rect x="0" y="20.17" width="90" height="0.7" fill="#000" opacity="0.08"/><rect x="-5.1" y="20.77" width="59.9" height="7.12" fill="#ab5537"/><rect x="54.5" y="20.77" width="28.0" height="7.12" fill="#a85234"/><rect x="82.2" y="20.77" width="59.1" height="7.12" fill="#b05a3c"/><rect x="0" y="27.09" width="90" height="0.7" fill="#000" opacity="0.08"/><rect x="-3.2" y="27.69" width="52.4" height="7.12" fill="#923f24"/><rect x="48.9" y="27.69" width="37.3" height="7.12" fill="#a95335"/><rect x="85.9" y="27.69" width="31.9" height="7.12" fill="#aa5436"/><rect x="0" y="34.02" width="90" height="0.7" fill="#000" opacity="0.08"/><rect x="-32.7" y="34.62" width="36.7" height="7.12" fill="#934025"/><rect x="3.7" y="34.62" width="30.0" height="7.12" fill="#a54f31"/><rect x="33.4" y="34.62" width="44.4" height="7.12" fill="#b25c3e"/><rect x="77.6" y="34.62" width="59.0" height="7.12" fill="#984428"/><rect x="0" y="40.94" width="90" height="0.7" fill="#000" opacity="0.08"/><rect x="-56.4" y="41.54" width="45.4" height="7.12" fill="#9b462a"/><rect x="-11.2" y="41.54" width="52.4" height="7.12" fill="#964327"/><rect x="40.9" y="41.54" width="33.2" height="7.12" fill="#a75133"/><rect x="73.8" y="41.54" width="34.7" height="7.12" fill="#b55f41"/><rect x="0" y="47.86" width="90" height="0.7" fill="#000" opacity="0.08"/><rect x="-56.4" y="48.46" width="23.1" height="7.12" fill="#a75133"/><rect x="-33.6" y="48.46" width="38.4" height="7.12" fill="#aa5436"/><rect x="4.5" y="48.46" width="45.9" height="7.12" fill="#9f4a2d"/><rect x="50.1" y="48.46" width="32.4" height="7.12" fill="#ad5739"/><rect x="82.2" y="48.46" width="30.8" height="7.12" fill="#a54f31"/><rect x="0" y="54.78" width="90" height="0.7" fill="#000" opacity="0.08"/><rect x="-49.9" y="55.38" width="59.1" height="7.12" fill="#9d482c"/><rect x="8.9" y="55.38" width="59.3" height="7.12" fill="#b35d3f"/><rect x="67.9" y="55.38" width="55.9" height="7.12" fill="#a34d2f"/><rect x="0" y="61.71" width="90" height="0.7" fill="#000" opacity="0.08"/><rect x="-4.7" y="62.31" width="25.7" height="7.12" fill="#a04b2e"/><rect x="20.8" y="62.31" width="43.6" height="7.12" fill="#994529"/><rect x="64.0" y="62.31" width="34.1" height="7.12" fill="#a44e30"/><rect x="0" y="68.63" width="90" height="0.7" fill="#000" opacity="0.08"/><rect x="-24.4" y="69.23" width="41.8" height="7.12" fill="#a44e30"/><rect x="17.1" y="69.23" width="40.1" height="7.12" fill="#a75133"/><rect x="56.9" y="69.23" width="31.5" height="7.12" fill="#994529"/><rect x="88.1" y="69.23" width="36.9" height="7.12" fill="#b35d3f"/><rect x="0" y="75.55" width="90" height="0.7" fill="#000" opacity="0.08"/><rect x="-35.2" y="76.15" width="39.2" height="7.12" fill="#a14c2e"/><rect x="3.7" y="76.15" width="45.4" height="7.12" fill="#a54f31"/><rect x="48.8" y="76.15" width="46.8" height="7.12" fill="#913f24"/><rect x="0" y="82.48" width="90" height="0.7" fill="#000" opacity="0.08"/><rect x="-46.8" y="83.08" width="34.4" height="7.12" fill="#954227"/><rect x="-12.7" y="83.08" width="43.0" height="7.12" fill="#9f4a2d"/><rect x="30.1" y="83.08" width="45.3" height="7.12" fill="#a85234"/><rect x="75.1" y="83.08" width="40.3" height="7.12" fill="#a44e30"/><rect x="0" y="89.40" width="90" height="0.7" fill="#000" opacity="0.08"/><rect width="90" height="90" filter="url(#grain)" opacity="0.06"/><rect width="90" height="90" filter="url(#grainl)" opacity="0.05"/></svg></div><div class="lb" style="left:375.50px;width:200px;top:397.82px;letter-spacing:-0.006px;">beechwood_rose...</div><div class="th" style="left:535px;top:300px;"><svg width="90" height="90" viewBox="0 0 90 90"><rect width="90" height="90" fill="#a97d40"/><rect x="-11.2" y="0.00" width="48.8" height="7.12" fill="#9e7236"/><rect x="37.2" y="0.00" width="41.9" height="7.12" fill="#a97d40"/><rect x="78.8" y="0.00" width="40.6" height="7.12" fill="#9d7136"/><rect x="0" y="6.32" width="90" height="0.7" fill="#000" opacity="0.1"/><rect x="-42.9" y="6.92" width="35.3" height="7.12" fill="#ad8245"/><rect x="-7.9" y="6.92" width="56.9" height="7.12" fill="#a5793d"/><rect x="48.7" y="6.92" width="31.8" height="7.12" fill="#aa7e41"/><rect x="80.2" y="6.92" width="30.4" height="7.12" fill="#af8346"/><rect x="0" y="13.25" width="90" height="0.7" fill="#000" opacity="0.1"/><rect x="-51.8" y="13.85" width="30.9" height="7.12" fill="#9f7338"/><rect x="-21.2" y="13.85" width="61.3" height="7.12" fill="#996d32"/><rect x="39.9" y="13.85" width="43.8" height="7.12" fill="#a97d40"/><rect x="83.4" y="13.85" width="55.3" height="7.12" fill="#a67a3d"/><rect x="0" y="20.17" width="90" height="0.7" fill="#000" opacity="0.1"/><rect x="-7.1" y="20.77" width="41.4" height="7.12" fill="#a4783b"/><rect x="34.0" y="20.77" width="49.7" height="7.12" fill="#a4783c"/><rect x="83.3" y="20.77" width="30.6" height="7.12" fill="#a87c3f"/><rect x="0" y="27.09" width="90" height="0.7" fill="#000" opacity="0.1"/><rect x="-25.2" y="27.69" width="41.5" height="7.12" fill="#b98f51"/><rect x="16.0" y="27.69" width="45.8" height="7.12" fill="#a77b3e"/><rect x="61.5" y="27.69" width="54.8" height="7.12" fill="#aa7e41"/><rect x="0" y="34.02" width="90" height="0.7" fill="#000" opacity="0.1"/><rect x="-5.5" y="34.62" width="28.2" height="7.12" fill="#b3884b"/><rect x="22.4" y="34.62" width="48.2" height="7.12" fill="#a5793c"/><rect x="70.4" y="34.62" width="58.7" height="7.12" fill="#ad8245"/><rect x="0" y="40.94" width="90" height="0.7" fill="#000" opacity="0.1"/><rect x="-50.7" y="41.54" width="49.6" height="7.12" fill="#b08548"/><rect x="-1.5" y="41.54" width="27.6" height="7.12" fill="#af8346"/><rect x="25.9" y="41.54" width="41.4" height="7.12" fill="#a4783c"/><rect x="67.0" y="41.54" width="38.9" height="7.12" fill="#9c7035"/><rect x="0" y="47.86" width="90" height="0.7" fill="#000" opacity="0.1"/><rect x="-43.5" y="48.46" width="28.0" height="7.12" fill="#986c31"/><rect x="-15.8" y="48.46" width="34.4" height="7.12" fill="#bc9254"/><rect x="18.3" y="48.46" width="43.9" height="7.12" fill="#b88d50"/><rect x="61.9" y="48.46" width="28.1" height="7.12" fill="#b98f51"/><rect x="89.8" y="48.46" width="48.4" height="7.12" fill="#a97d40"/><rect x="0" y="54.78" width="90" height="0.7" fill="#000" opacity="0.1"/><rect x="-34.6" y="55.38" width="40.7" height="7.12" fill="#ba8f52"/><rect x="5.7" y="55.38" width="53.1" height="7.12" fill="#a87c3f"/><rect x="58.5" y="55.38" width="46.7" height="7.12" fill="#a87c3f"/><rect x="0" y="61.71" width="90" height="0.7" fill="#000" opacity="0.1"/><rect x="-54.3" y="62.31" width="58.5" height="7.12" fill="#b4894c"/><rect x="3.9" y="62.31" width="53.7" height="7.12" fill="#ac8144"/><rect x="57.3" y="62.31" width="34.2" height="7.12" fill="#ba9052"/><rect x="0" y="68.63" width="90" height="0.7" fill="#000" opacity="0.1"/><rect x="-57.7" y="69.23" width="52.6" height="7.12" fill="#b08547"/><rect x="-5.3" y="69.23" width="43.2" height="7.12" fill="#a5793d"/><rect x="37.6" y="69.23" width="25.4" height="7.12" fill="#ac8043"/><rect x="62.7" y="69.23" width="54.2" height="7.12" fill="#b58a4d"/><rect x="0" y="75.55" width="90" height="0.7" fill="#000" opacity="0.1"/><rect x="-36.4" y="76.15" width="24.9" height="7.12" fill="#9a6e33"/><rect x="-11.8" y="76.15" width="59.8" height="7.12" fill="#a77b3f"/><rect x="47.6" y="76.15" width="38.6" height="7.12" fill="#ad8144"/><rect x="86.0" y="76.15" width="62.1" height="7.12" fill="#bb9153"/><rect x="0" y="82.48" width="90" height="0.7" fill="#000" opacity="0.1"/><rect x="-49.8" y="83.08" width="24.1" height="7.12" fill="#9d7136"/><rect x="-25.9" y="83.08" width="30.9" height="7.12" fill="#b4894b"/><rect x="4.7" y="83.08" width="49.3" height="7.12" fill="#a3773b"/><rect x="53.7" y="83.08" width="56.0" height="7.12" fill="#a5793d"/><rect x="0" y="89.40" width="90" height="0.7" fill="#000" opacity="0.1"/><rect width="90" height="90" filter="url(#grain)" opacity="0.06"/><rect width="90" height="90" filter="url(#grainl)" opacity="0.05"/></svg></div><div class="lb" style="left:480.52px;width:200px;top:397.82px;letter-spacing:0.031px;">beechwood_teas...</div><div class="a" style="left:667px;top:0;width:16px;height:404px;background:linear-gradient(90deg,#e6e6e6 0,#f0f0f0 4px,#f4f4f4 100%);"></div><div class="a" style="left:667px;top:20px;width:15px;height:15px;border:1px solid #8e8e8e;border-radius:2px;background:linear-gradient(90deg,#f6f6f6 0,#dcdcdf 50%,#c9c9cd 55%,#e8e8ea 100%);box-shadow:inset 0 0 0 1px #fff;"></div><svg class="a" style="left:671.5px;top:7px;" width="7" height="4" viewBox="0 0 7 4"><path d="M0 4 L3.5 0 L7 4 Z" fill="#3a3a3a"/></svg><svg class="a" style="left:671.5px;top:394px;" width="7" height="4" viewBox="0 0 7 4"><path d="M0 0 L3.5 4 L7 0 Z" fill="#3a3a3a"/></svg></div><div class="t" style="left:122px;top:523.19px;font-size:11px;color:#e8e8e8;letter-spacing:-0.287px;">File <u>n</u>ame:</div><div class="cmb" style="left:218px;top:520px;width:470px;height:20px;background:#626262;"></div><div class="t" style="left:223.5px;top:523.19px;font-size:11px;color:#d6d6d6;letter-spacing:-0.014px;">beechwood_amaretto.png</div><div class="tri" style="left:674.5px;top:528px;"></div><div class="t" style="left:122px;top:549.19px;font-size:11px;color:#e8e8e8;letter-spacing:0.007px;">Files of <u>t</u>ype:</div><div class="cmb" style="left:218px;top:548px;width:470px;height:19px;background:#626262;"></div><div class="t" style="left:223.5px;top:549.69px;font-size:11px;color:#d6d6d6;letter-spacing:-0.239px;">All Formats</div><div class="tri" style="left:674.5px;top:555px;"></div><div class="t" style="left:122px;top:575.69px;font-size:11px;color:#e8e8e8;letter-spacing:-0.121px;">Name template:</div><div class="cmb" style="left:218px;top:577px;width:470px;height:19px;background:#5a5a5a;"></div><div class="tri" style="left:674.5px;top:584px;border-top-color:#8e8e8e;"></div><div class="btn" style="left:698px;top:520px;width:22px;height:20px;background:#575757;"></div><svg class="a" style="left:705px;top:527px;" width="9" height="8" viewBox="0 0 9 8"><path d="M4.5 0 L4.5 8 M.5 3.5 L8.5 3.5" stroke="#9a9a9a" stroke-width="1" shape-rendering="crispEdges"/></svg><div class="btn" style="left:730px;top:520px;width:73px;height:21px;"></div><div class="t" style="left:666.38px;width:200px;text-align:center;top:523.69px;font-size:11px;color:#ececec;letter-spacing:-0.234px;"><u>O</u>pen</div><div class="btn" style="left:730px;top:546px;width:73px;height:21px;"></div><div class="t" style="left:666.31px;width:200px;text-align:center;top:549.19px;font-size:11px;color:#ececec;letter-spacing:-0.375px;">Cancel</div><div class="btn" style="left:23px;top:619px;width:98px;height:26px;background:#646464;"></div><div class="t" style="left:-28.72px;width:200px;text-align:center;top:623.69px;font-size:11px;color:#ececec;letter-spacing:0.169px;">Devices...</div><div class="btn" style="left:23px;top:659px;width:98px;height:26px;background:#5c5c5c;"></div><div class="t" style="left:-28.67px;width:200px;text-align:center;top:663.69px;font-size:11px;color:#8e8e8e;letter-spacing:0.254px;">Setup...</div><div class="btn" style="left:23px;top:695px;width:98px;height:26px;background:#646464;"></div><div class="t" style="left:-28.48px;width:200px;text-align:center;top:699.69px;font-size:11px;color:#ececec;letter-spacing:0.634px;">Info...</div><div class="btn" style="left:23px;top:727px;width:98px;height:26px;background:#646464;"></div><div class="t" style="left:-29.01px;width:200px;text-align:center;top:731.69px;font-size:11px;color:#ececec;letter-spacing:-0.410px;">View</div><div class="a" style="left:132px;top:620px;width:242px;height:95px;border:1px solid #383838;border-radius:3px;"></div><div class="a" style="left:137px;top:616px;width:43px;height:10px;background:#444;"></div><div class="t" style="left:140.5px;top:612.69px;font-size:11px;color:#e8e8e8;letter-spacing:-0.825px;">Gamma</div><div class="a" style="left:132px;top:716px;width:242px;height:42px;border:1px solid #383838;border-radius:3px;"></div><div class="a" style="left:149px;top:646px;width:11px;height:11px;border-radius:50%;background:#6a6a6a;"></div><div class="t" style="left:166.5px;top:643.69px;font-size:11px;color:#e8e8e8;letter-spacing:-0.215px;">Automatic (Recommended)</div><div class="a" style="left:149px;top:670px;width:11px;height:11px;border-radius:50%;background:#6c6c6c;"></div><div class="a" style="left:151.5px;top:672.5px;width:6px;height:6px;border-radius:50%;background:#e9e9e9;box-shadow:0 0 1px #e9e9e9;"></div><div class="t" style="left:166.5px;top:667.69px;font-size:11px;color:#e8e8e8;letter-spacing:-0.023px;">Override</div><div class="a" style="left:245px;top:667px;width:75px;height:18px;background:#646464;"></div><div class="a" style="left:320px;top:667px;width:11px;height:14px;background:#646464;"></div><div class="t" style="left:248px;top:666.19px;font-size:11px;color:#d0d0d0;letter-spacing:-0.104px;">2.2</div><svg class="a" style="left:323px;top:670px;" width="5" height="9" viewBox="0 0 5 9"><path d="M0 3 L2.5 0 L5 3 Z M0 5.5 L2.5 8.5 L5 5.5 Z" fill="#f0f0f0"/></svg><div class="a" style="left:149px;top:731px;width:10px;height:10px;background:#6a6a6a;"></div><svg class="a" style="left:149px;top:731px;" width="10" height="10" viewBox="0 0 10 10"><path d="M1.6 5.2 L3.8 7.6 L8.6 1.8" stroke="#f2f2f2" stroke-width="1.7" fill="none"/></svg><div class="t" style="left:161.8px;top:727.69px;font-size:11px;color:#e8e8e8;letter-spacing:-0.387px;">Sequence</div><div class="a" style="left:277px;top:731px;width:10px;height:10px;background:#6a6a6a;"></div><svg class="a" style="left:277px;top:731px;" width="10" height="10" viewBox="0 0 10 10"><path d="M1.6 5.2 L3.8 7.6 L8.6 1.8" stroke="#f2f2f2" stroke-width="1.7" fill="none"/></svg><div class="t" style="left:289.5px;top:727.69px;font-size:11px;color:#e8e8e8;letter-spacing:-0.161px;">Preview</div><div class="a" style="left:388px;top:618px;width:196px;height:136px;background:#000;border:1px solid #f0f0f0;"></div><div class="a" style="left:419px;top:619px;width:134px;height:134px;overflow:hidden;"><svg width="134" height="134" viewBox="0 0 134 134"><rect width="134" height="134" fill="#a4532d"/><rect x="0" y="0" width="134" height="25" fill="#a85730"/><rect x="0" y="25" width="134" height="42" fill="#a04f2a"/><rect x="0" y="67" width="134" height="25" fill="#9e4d29"/><rect x="0" y="92" width="134" height="17" fill="#a6552f"/><rect x="0" y="109" width="134" height="25" fill="#a2512c"/><rect x="0" y="24.5" width="134" height=".8" fill="#6e2f14" opacity=".6"/><rect x="0" y="66.5" width="134" height=".8" fill="#6e2f14" opacity=".5"/><rect x="0" y="91.5" width="134" height=".8" fill="#6e2f14" opacity=".7"/><rect x="55" y="108.5" width="79" height=".8" fill="#6e2f14" opacity=".5"/><rect width="134" height="134" filter="url(#grain)" opacity=".12"/><rect width="134" height="134" filter="url(#speck)" opacity=".5"/><rect width="134" height="134" filter="url(#speckl)" opacity=".4"/></svg></div><div class="t" style="left:22px;top:768.69px;font-size:11px;color:#e8e8e8;letter-spacing:-0.099px;">Statistics:</div><div class="t" style="left:108px;top:768.69px;font-size:11px;color:#e8e8e8;letter-spacing:-0.230px;">1024x1024, RGB Color 8 Bits/Channel - Single Image</div><div class="t" style="left:24px;top:790.69px;font-size:11px;color:#e8e8e8;letter-spacing:-0.188px;">Location:</div><div class="t" style="left:108px;top:790.69px;font-size:11px;color:#e8e8e8;letter-spacing:-0.061px;">C:\Program Files (x86)\Common Files\Autodesk Shared\Materials\Tex...\beechwood_amaretto.png</div><div class="a" style="left:825px;top:807px;width:2px;height:2px;background:#000;"></div><div class="a" style="left:821px;top:811px;width:2px;height:2px;background:#000;"></div><div class="a" style="left:825px;top:811px;width:2px;height:2px;background:#000;"></div><div class="a" style="left:817px;top:815px;width:2px;height:2px;background:#000;"></div><div class="a" style="left:821px;top:815px;width:2px;height:2px;background:#000;"></div><div class="a" style="left:825px;top:815px;width:2px;height:2px;background:#000;"></div></body></html>
